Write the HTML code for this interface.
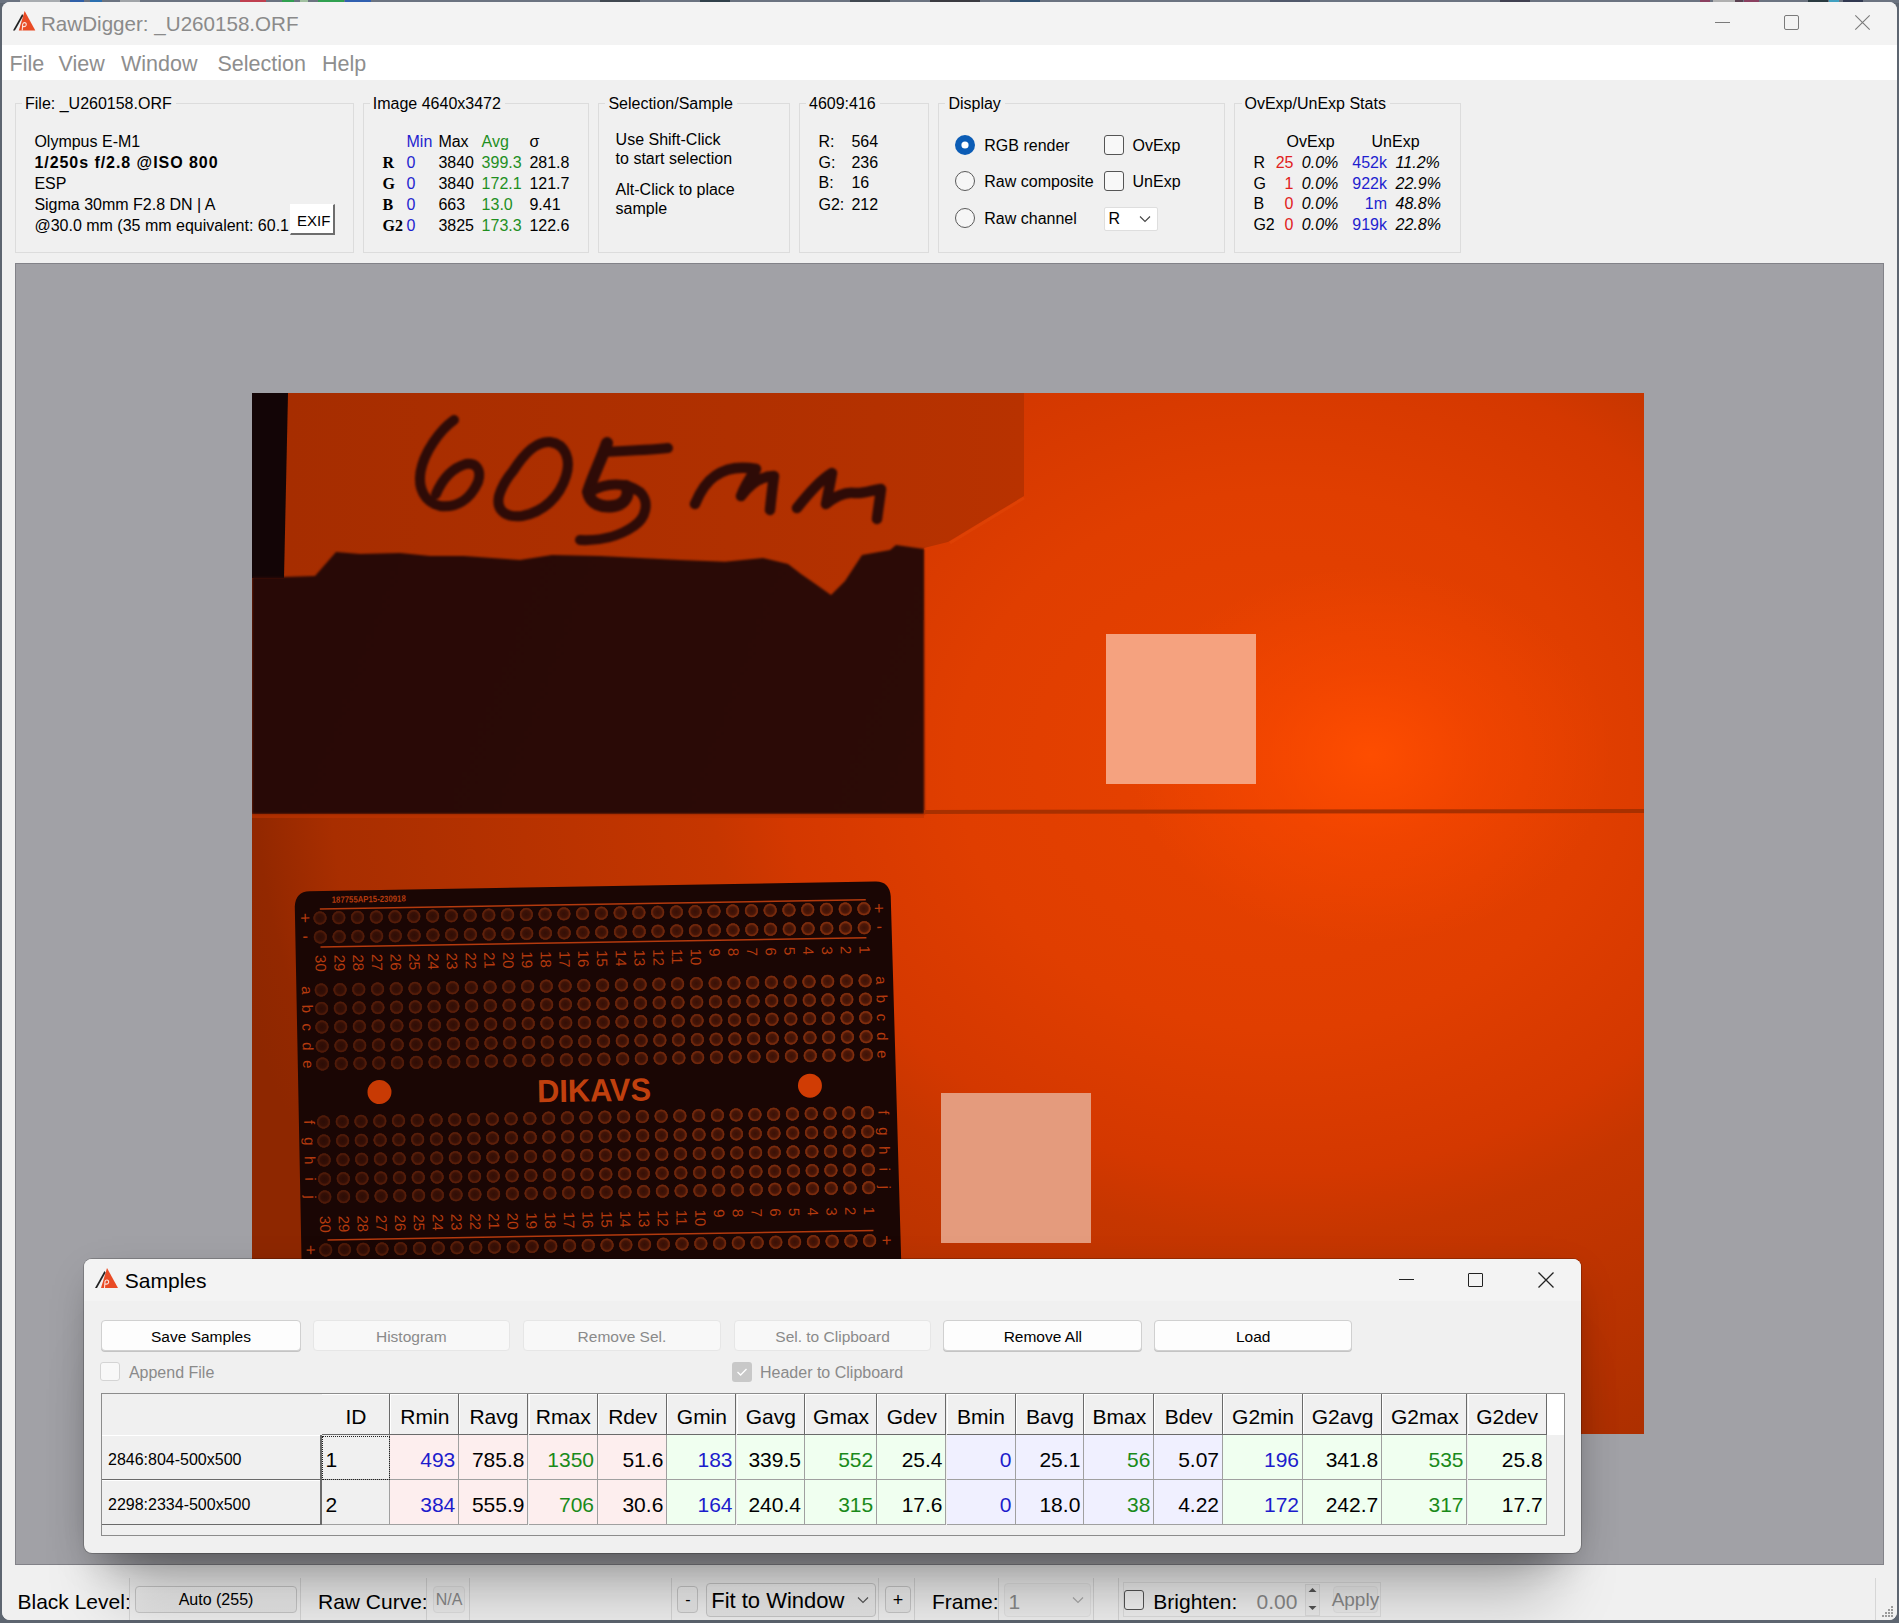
<!DOCTYPE html><html><head><meta charset="utf-8"><title>RawDigger</title><style>
*{margin:0;padding:0;box-sizing:border-box}
html,body{width:1899px;height:1623px;overflow:hidden;background:#5d6570;font-family:'Liberation Sans', sans-serif}
.t{position:absolute;white-space:pre;line-height:1;font-family:'Liberation Sans', sans-serif;color:#000}
svg{position:absolute;overflow:visible}
</style></head><body>
<div style="position:absolute;left:0px;top:0px;width:1899px;height:3px;background:#6b7380"></div>
<div style="position:absolute;left:20px;top:0px;width:40px;height:3px;background:#a8acb0"></div>
<div style="position:absolute;left:70px;top:0px;width:14px;height:3px;background:#2f5fa8"></div>
<div style="position:absolute;left:90px;top:0px;width:12px;height:3px;background:#2a6fb0"></div>
<div style="position:absolute;left:120px;top:0px;width:20px;height:3px;background:#a0a4a8"></div>
<div style="position:absolute;left:240px;top:0px;width:26px;height:3px;background:#c04050"></div>
<div style="position:absolute;left:282px;top:0px;width:12px;height:3px;background:#30a050"></div>
<div style="position:absolute;left:300px;top:0px;width:8px;height:3px;background:#a0c0a0"></div>
<div style="position:absolute;left:318px;top:0px;width:26px;height:3px;background:#30a050"></div>
<div style="position:absolute;left:345px;top:0px;width:26px;height:3px;background:#3060b0"></div>
<div style="position:absolute;left:600px;top:0px;width:40px;height:3px;background:#404850"></div>
<div style="position:absolute;left:700px;top:0px;width:30px;height:3px;background:#30404a"></div>
<div style="position:absolute;left:850px;top:0px;width:40px;height:3px;background:#404850"></div>
<div style="position:absolute;left:930px;top:0px;width:50px;height:3px;background:#3a3a40"></div>
<div style="position:absolute;left:1010px;top:0px;width:30px;height:3px;background:#305070"></div>
<div style="position:absolute;left:1270px;top:0px;width:40px;height:3px;background:#50586a"></div>
<div style="position:absolute;left:1500px;top:0px;width:30px;height:3px;background:#404050"></div>
<div style="position:absolute;left:1700px;top:0px;width:10px;height:3px;background:#8a4060"></div>
<div style="position:absolute;left:1713px;top:0px;width:30px;height:3px;background:#b0b0b0"></div>
<div style="position:absolute;left:1735px;top:0px;width:8px;height:3px;background:#5a4050"></div>
<div style="position:absolute;left:1744px;top:0px;width:15px;height:3px;background:#8a4060"></div>
<div style="position:absolute;left:1808px;top:0px;width:20px;height:3px;background:#2a3a40"></div>
<div style="position:absolute;left:1829px;top:0px;width:10px;height:3px;background:#40a0c0"></div>
<div style="position:absolute;left:1843px;top:0px;width:20px;height:3px;background:#303850"></div>
<div style="position:absolute;left:2px;top:2px;width:1895px;height:1618px;background:#f0f0f0;border-radius:8px;"></div>
<div style="position:absolute;left:2px;top:2px;width:1895px;height:43px;background:#f3f3f3;border-radius:8px 8px 0 0;"></div>
<div style="position:absolute;left:2px;top:45px;width:1895px;height:35px;background:#ffffff;"></div>
<svg style="left:13px;top:11px" width="23.28" height="20.37" viewBox="0 0 24 21">
<polygon points="12,0 23,20 6,20" fill="#e94b25"/>
<polygon points="0,20 9.5,3 10.6,4.8 2,20" fill="#222"/>
<path d="M9.5 20 L10 13.5 Q10.5 11.8 12.2 12 Q14 12.4 13.6 14.6 Q13 16.5 10.3 16" stroke="#fff" stroke-width="1.1" fill="none" opacity="0.85"/>
</svg>
<div class="t" style="top:13.56px;font-size:20.6px;color:#8a8a8a;left:41.00px;">RawDigger: _U260158.ORF</div>
<div style="position:absolute;left:1715px;top:22px;width:15px;height:1px;background:#7a7a7a;"></div>
<div style="position:absolute;left:1784.4px;top:15.2px;width:14.4px;height:14.4px;border:1.1px solid #7a7a7a;border-radius:2px;"></div>
<svg style="left:1855px;top:15px" width="15" height="15" viewBox="0 0 15 15"><path d="M0.3 0.3 L14.7 14.7 M14.7 0.3 L0.3 14.7" stroke="#7a7a7a" stroke-width="1.1"/></svg>
<div class="t" style="top:53.80px;font-size:21.5px;color:#8e8e8e;left:9.50px;">File</div>
<div class="t" style="top:53.80px;font-size:21.5px;color:#8e8e8e;left:58.50px;">View</div>
<div class="t" style="top:53.80px;font-size:21.5px;color:#8e8e8e;left:121.00px;">Window</div>
<div class="t" style="top:53.80px;font-size:21.5px;color:#8e8e8e;left:217.50px;">Selection</div>
<div class="t" style="top:53.80px;font-size:21.5px;color:#8e8e8e;left:322.00px;">Help</div>
<div style="position:absolute;left:15px;top:103px;width:339px;height:150px;border:1px solid #dcdcdc"></div>
<div class="t" style="top:96.16px;font-size:16px;left:22.00px;background:#f0f0f0;padding:0 4px 0 3px;">File: _U260158.ORF</div>
<div style="position:absolute;left:363px;top:103px;width:226px;height:150px;border:1px solid #dcdcdc"></div>
<div class="t" style="top:96.16px;font-size:16px;left:369.80px;background:#f0f0f0;padding:0 4px 0 3px;">Image 4640x3472</div>
<div style="position:absolute;left:598px;top:103px;width:192px;height:150px;border:1px solid #dcdcdc"></div>
<div class="t" style="top:96.16px;font-size:16px;left:605.40px;background:#f0f0f0;padding:0 4px 0 3px;">Selection/Sample</div>
<div style="position:absolute;left:799px;top:103px;width:130px;height:150px;border:1px solid #dcdcdc"></div>
<div class="t" style="top:96.16px;font-size:16px;left:806.00px;background:#f0f0f0;padding:0 4px 0 3px;">4609:416</div>
<div style="position:absolute;left:938px;top:103px;width:287px;height:150px;border:1px solid #dcdcdc"></div>
<div class="t" style="top:96.16px;font-size:16px;left:945.40px;background:#f0f0f0;padding:0 4px 0 3px;">Display</div>
<div style="position:absolute;left:1234px;top:103px;width:227px;height:150px;border:1px solid #dcdcdc"></div>
<div class="t" style="top:96.16px;font-size:16px;left:1241.50px;background:#f0f0f0;padding:0 4px 0 3px;">OvExp/UnExp Stats</div>
<div class="t" style="top:134.46px;font-size:16px;left:34.40px;">Olympus E-M1</div>
<div class="t" style="top:155.46px;font-size:16px;font-weight:bold;letter-spacing:0.95px;left:34.40px;">1/250s f/2.8 @ISO 800</div>
<div class="t" style="top:176.06px;font-size:16px;left:34.40px;">ESP</div>
<div class="t" style="top:197.46px;font-size:16px;left:34.40px;">Sigma 30mm F2.8 DN | A</div>
<div class="t" style="top:218.06px;font-size:16px;left:34.40px;width:256px;overflow:hidden;">@30.0 mm (35 mm equivalent: 60.1</div>
<div style="position:absolute;left:290px;top:204px;width:45px;height:31px;background:#fff;border-right:2px solid #6d6d6d;border-bottom:2px solid #6d6d6d;border-top:1px solid #fff;border-left:1px solid #fff"></div>
<div class="t" style="top:213.30px;font-size:15px;left:297.00px;">EXIF</div>
<div class="t" style="top:134.16px;font-size:16px;color:#1f1fcf;left:406.50px;">Min</div>
<div class="t" style="top:134.16px;font-size:16px;left:438.40px;">Max</div>
<div class="t" style="top:134.16px;font-size:16px;color:#1f8f1f;left:481.60px;">Avg</div>
<div class="t" style="top:134.16px;font-size:16px;left:529.40px;">σ</div>
<div class="t" style="top:155.20px;font-size:16px;font-weight:bold;font-family:'Liberation Serif', serif;left:382.50px;">R</div>
<div class="t" style="top:155.06px;font-size:16px;color:#1f1fcf;left:406.50px;">0</div>
<div class="t" style="top:155.06px;font-size:16px;left:438.40px;">3840</div>
<div class="t" style="top:155.06px;font-size:16px;color:#1f8f1f;left:481.60px;">399.3</div>
<div class="t" style="top:155.06px;font-size:16px;left:529.40px;">281.8</div>
<div class="t" style="top:176.10px;font-size:16px;font-weight:bold;font-family:'Liberation Serif', serif;left:382.50px;">G</div>
<div class="t" style="top:175.96px;font-size:16px;color:#1f1fcf;left:406.50px;">0</div>
<div class="t" style="top:175.96px;font-size:16px;left:438.40px;">3840</div>
<div class="t" style="top:175.96px;font-size:16px;color:#1f8f1f;left:481.60px;">172.1</div>
<div class="t" style="top:175.96px;font-size:16px;left:529.40px;">121.7</div>
<div class="t" style="top:196.90px;font-size:16px;font-weight:bold;font-family:'Liberation Serif', serif;left:382.50px;">B</div>
<div class="t" style="top:196.76px;font-size:16px;color:#1f1fcf;left:406.50px;">0</div>
<div class="t" style="top:196.76px;font-size:16px;left:438.40px;">663</div>
<div class="t" style="top:196.76px;font-size:16px;color:#1f8f1f;left:481.60px;">13.0</div>
<div class="t" style="top:196.76px;font-size:16px;left:529.40px;">9.41</div>
<div class="t" style="top:217.80px;font-size:16px;font-weight:bold;font-family:'Liberation Serif', serif;left:382.50px;">G2</div>
<div class="t" style="top:217.66px;font-size:16px;color:#1f1fcf;left:406.50px;">0</div>
<div class="t" style="top:217.66px;font-size:16px;left:438.40px;">3825</div>
<div class="t" style="top:217.66px;font-size:16px;color:#1f8f1f;left:481.60px;">173.3</div>
<div class="t" style="top:217.66px;font-size:16px;left:529.40px;">122.6</div>
<div class="t" style="top:131.96px;font-size:16px;left:615.60px;">Use Shift-Click</div>
<div class="t" style="top:150.76px;font-size:16px;left:615.60px;">to start selection</div>
<div class="t" style="top:182.06px;font-size:16px;left:615.60px;">Alt-Click to place</div>
<div class="t" style="top:200.86px;font-size:16px;left:615.60px;">sample</div>
<div class="t" style="top:133.76px;font-size:16px;left:818.50px;">R:</div>
<div class="t" style="top:133.76px;font-size:16px;left:851.40px;">564</div>
<div class="t" style="top:154.66px;font-size:16px;left:818.50px;">G:</div>
<div class="t" style="top:154.66px;font-size:16px;left:851.40px;">236</div>
<div class="t" style="top:175.46px;font-size:16px;left:818.50px;">B:</div>
<div class="t" style="top:175.46px;font-size:16px;left:851.40px;">16</div>
<div class="t" style="top:196.76px;font-size:16px;left:818.50px;">G2:</div>
<div class="t" style="top:196.76px;font-size:16px;left:851.40px;">212</div>
<svg style="left:954px;top:134px" width="22" height="22" viewBox="0 0 22 22"><circle cx="11" cy="11" r="10" fill="#0b5cb5"/><circle cx="11" cy="11" r="3.6" fill="#fff"/></svg>
<svg style="left:954px;top:169.8px" width="22" height="22" viewBox="0 0 22 22"><circle cx="11" cy="11" r="9.5" fill="#f6f6f6" stroke="#5a5a5a" stroke-width="1"/></svg>
<svg style="left:954px;top:206.6px" width="22" height="22" viewBox="0 0 22 22"><circle cx="11" cy="11" r="9.5" fill="#f6f6f6" stroke="#5a5a5a" stroke-width="1"/></svg>
<div class="t" style="top:138.06px;font-size:16px;left:984.30px;">RGB render</div>
<div class="t" style="top:174.06px;font-size:16px;left:984.30px;">Raw composite</div>
<div class="t" style="top:210.76px;font-size:16px;left:984.30px;">Raw channel</div>
<div style="position:absolute;left:1104px;top:135px;width:20px;height:20px;border:1px solid #555;border-radius:3px;background:#f8f8f8;"></div>
<div style="position:absolute;left:1104px;top:171.4px;width:20px;height:20px;border:1px solid #555;border-radius:3px;background:#f8f8f8;"></div>
<div class="t" style="top:138.06px;font-size:16px;left:1132.50px;">OvExp</div>
<div class="t" style="top:174.06px;font-size:16px;left:1132.50px;">UnExp</div>
<div style="position:absolute;left:1104.4px;top:206.6px;width:54px;height:24px;background:#fff;border:1px solid #dedede;border-radius:2px;"></div>
<div class="t" style="top:210.76px;font-size:16px;left:1108.50px;">R</div>
<svg style="left:1139px;top:215px" width="12" height="8" viewBox="0 0 12 8"><path d="M1 1.5 L6 6.5 L11 1.5" stroke="#444" stroke-width="1.1" fill="none"/></svg>
<div class="t" style="top:133.96px;font-size:16px;left:1286.60px;">OvExp</div>
<div class="t" style="top:133.96px;font-size:16px;left:1371.50px;">UnExp</div>
<div class="t" style="top:154.86px;font-size:16px;left:1253.40px;">R</div>
<div class="t" style="top:154.86px;font-size:16px;color:#e02020;right:605.50px;">25</div>
<div class="t" style="top:154.86px;font-size:16px;font-style:italic;left:1301.80px;">0.0%</div>
<div class="t" style="top:154.86px;font-size:16px;color:#1f1fcf;right:512.00px;">452k</div>
<div class="t" style="top:154.86px;font-size:16px;font-style:italic;left:1395.60px;">11.2%</div>
<div class="t" style="top:175.66px;font-size:16px;left:1253.40px;">G</div>
<div class="t" style="top:175.66px;font-size:16px;color:#e02020;right:605.50px;">1</div>
<div class="t" style="top:175.66px;font-size:16px;font-style:italic;left:1301.80px;">0.0%</div>
<div class="t" style="top:175.66px;font-size:16px;color:#1f1fcf;right:512.00px;">922k</div>
<div class="t" style="top:175.66px;font-size:16px;font-style:italic;left:1395.60px;">22.9%</div>
<div class="t" style="top:196.46px;font-size:16px;left:1253.40px;">B</div>
<div class="t" style="top:196.46px;font-size:16px;color:#e02020;right:605.50px;">0</div>
<div class="t" style="top:196.46px;font-size:16px;font-style:italic;left:1301.80px;">0.0%</div>
<div class="t" style="top:196.46px;font-size:16px;color:#1f1fcf;right:512.00px;">1m</div>
<div class="t" style="top:196.46px;font-size:16px;font-style:italic;left:1395.60px;">48.8%</div>
<div class="t" style="top:217.36px;font-size:16px;left:1253.40px;">G2</div>
<div class="t" style="top:217.36px;font-size:16px;color:#e02020;right:605.50px;">0</div>
<div class="t" style="top:217.36px;font-size:16px;font-style:italic;left:1301.80px;">0.0%</div>
<div class="t" style="top:217.36px;font-size:16px;color:#1f1fcf;right:512.00px;">919k</div>
<div class="t" style="top:217.36px;font-size:16px;font-style:italic;left:1395.60px;">22.8%</div>
<div style="position:absolute;left:15px;top:263px;width:1869px;height:1302px;background:#a1a1a6;border:1px solid #828288;"></div>
<svg style="left:252px;top:393px;overflow:hidden" width="1392" height="1041" viewBox="252 393 1392 1041">
<defs>
<radialGradient id="glow" gradientUnits="userSpaceOnUse" cx="1280" cy="760" r="1080" gradientTransform="translate(1280 760) scale(1 0.833) translate(-1280 -760)">
 <stop offset="0" stop-color="#e84200"/>
 <stop offset="0.3" stop-color="#e03e00"/>
 <stop offset="0.46" stop-color="#d43800"/>
 <stop offset="0.53" stop-color="#c63600"/>
 <stop offset="0.88" stop-color="#a82e00"/>
 <stop offset="0.95" stop-color="#932800"/>
 <stop offset="1" stop-color="#8e2700"/>
</radialGradient>
<radialGradient id="hot" gradientUnits="userSpaceOnUse" cx="1370" cy="755" r="210" gradientTransform="translate(1370 755) scale(1.15 0.9) translate(-1370 -755)">
 <stop offset="0" stop-color="#ff4e00" stop-opacity="0.95"/>
 <stop offset="0.45" stop-color="#ff4a00" stop-opacity="0.45"/>
 <stop offset="1" stop-color="#ff4a00" stop-opacity="0"/>
</radialGradient>
<linearGradient id="paper" gradientUnits="userSpaceOnUse" x1="288" y1="450" x2="1024" y2="450">
 <stop offset="0" stop-color="#a62d00"/>
 <stop offset="0.6" stop-color="#b03000"/>
 <stop offset="1" stop-color="#b83200"/>
</linearGradient>
<linearGradient id="card" gradientUnits="userSpaceOnUse" x1="252" y1="560" x2="924" y2="814">
 <stop offset="0" stop-color="#280906"/>
 <stop offset="1" stop-color="#2c0b06"/>
</linearGradient>
<filter id="soft" x="-5%" y="-5%" width="110%" height="110%" color-interpolation-filters="sRGB"><feGaussianBlur stdDeviation="0.9"/></filter>
</defs>
<rect x="252" y="393" width="1392" height="1041" fill="url(#glow)"/>
<rect x="252" y="393" width="1392" height="1041" fill="url(#hot)"/>
<polygon points="288,393 1024,393 1024,496 948,542 924,548 924,620 252,620 252,393" fill="url(#paper)"/>
<polyline points="1024,498 950,543" stroke="#f05a14" stroke-width="3" opacity="0.2" fill="none"/>
<polygon points="252,393 288,393 284,578 252,578" fill="#130506"/>
<polygon points="252,577 284,577 315,576 336,552 360,554 400,553 430,556 464,556 520,560 552,555 600,556 640,558 680,560 725,561.7 763,558 788,564 801,574 814,583 831,595 845,581 862,555 890,550 896,545 924,549 924.3,814 252,814" fill="url(#card)" filter="url(#soft)"/>
<polygon points="924,810 1644,809 1644,813 924,814" fill="#a83000"/>
<polygon points="252,814 924,814 924,818 252,818" fill="#c03400" opacity="0.6"/>
<g filter="url(#soft)">
<path d="M454 420 C440 430 424 452 420.5 472 C418 488 424 502 440 506 C456 508 470 500 478 482 C482 470 476 462 466 464 C452 468 442 480 436 494" stroke="#2e0b07" stroke-width="10" fill="none" stroke-linecap="round" stroke-linejoin="round"/>
<path d="M513 471 C525 452 538 441 550 442 C566 444 571 460 566 476 C560 496 544 512 522 516 C505 518 496 510 499 496 C502 486 507 478 513 471 Z" stroke="#2e0b07" stroke-width="10" fill="none" stroke-linecap="round" stroke-linejoin="round"/>
<path d="M607 443 C602 458 592 478 588 492 C590 504 602 508 614 506 C626 504 630 494 626 486" stroke="#2e0b07" stroke-width="12" fill="none" stroke-linecap="round" stroke-linejoin="round"/>
<path d="M604 452 C625 451 648 450 668 448" stroke="#2e0b07" stroke-width="10" fill="none" stroke-linecap="round" stroke-linejoin="round"/>
<path d="M590 492 C606 482 626 482 640 492 C650 502 646 518 634 526 C620 536 600 541 580 540" stroke="#2e0b07" stroke-width="10" fill="none" stroke-linecap="round" stroke-linejoin="round"/>
<path d="M695 504 C700 492 706 482 715 476 C726 468 740 466 756 469 C750 478 744 488 741 496 C750 484 762 476 774 476 C772 490 771 500 770 510" stroke="#2e0b07" stroke-width="10.5" fill="none" stroke-linecap="round" stroke-linejoin="round"/>
<path d="M797 508 C808 494 820 480 832 473 C830 484 828 494 826 504 C836 496 846 492 854 493 C864 494 872 490 881 489 C880 498 878 510 877 519" stroke="#2e0b07" stroke-width="10.5" fill="none" stroke-linecap="round" stroke-linejoin="round"/>
</g>
<rect x="1106" y="634" width="150" height="150" fill="#f5a27f"/>
<rect x="941" y="1093" width="150" height="150" fill="#e49b7d"/>
<g transform="rotate(-0.98 320 918)">
<path d="M310 891 L876 891 Q890 891 891 906 L897 1420 L296 1420 L295 906 Q296 891 310 891 Z" fill="#1a0604"/>
<line x1="320" y1="909" x2="866" y2="909" stroke="#b43a0e" stroke-width="1.5"/>
<line x1="320" y1="947" x2="866" y2="947" stroke="#b43a0e" stroke-width="1.5"/>
<line x1="322" y1="1240" x2="868" y2="1240" stroke="#b43a0e" stroke-width="1.5"/>
<defs><radialGradient id="hole"><stop offset="0" stop-color="#3e1206"/><stop offset="0.55" stop-color="#4e1808"/><stop offset="0.8" stop-color="#86300e"/><stop offset="0.92" stop-color="#6a240a"/><stop offset="1" stop-color="#1a0604" stop-opacity="0"/></radialGradient></defs><circle cx="320.0" cy="918" r="7.2" fill="url(#hole)" opacity="0.50"/><circle cx="338.8" cy="918" r="7.2" fill="url(#hole)" opacity="0.52"/><circle cx="357.5" cy="918" r="7.2" fill="url(#hole)" opacity="0.53"/><circle cx="376.3" cy="918" r="7.2" fill="url(#hole)" opacity="0.55"/><circle cx="395.0" cy="918" r="7.2" fill="url(#hole)" opacity="0.57"/><circle cx="413.8" cy="918" r="7.2" fill="url(#hole)" opacity="0.59"/><circle cx="432.6" cy="918" r="7.2" fill="url(#hole)" opacity="0.60"/><circle cx="451.3" cy="918" r="7.2" fill="url(#hole)" opacity="0.62"/><circle cx="470.1" cy="918" r="7.2" fill="url(#hole)" opacity="0.64"/><circle cx="488.8" cy="918" r="7.2" fill="url(#hole)" opacity="0.66"/><circle cx="507.6" cy="918" r="7.2" fill="url(#hole)" opacity="0.67"/><circle cx="526.4" cy="918" r="7.2" fill="url(#hole)" opacity="0.69"/><circle cx="545.1" cy="918" r="7.2" fill="url(#hole)" opacity="0.71"/><circle cx="563.9" cy="918" r="7.2" fill="url(#hole)" opacity="0.72"/><circle cx="582.6" cy="918" r="7.2" fill="url(#hole)" opacity="0.74"/><circle cx="601.4" cy="918" r="7.2" fill="url(#hole)" opacity="0.76"/><circle cx="620.2" cy="918" r="7.2" fill="url(#hole)" opacity="0.78"/><circle cx="638.9" cy="918" r="7.2" fill="url(#hole)" opacity="0.79"/><circle cx="657.7" cy="918" r="7.2" fill="url(#hole)" opacity="0.81"/><circle cx="676.4" cy="918" r="7.2" fill="url(#hole)" opacity="0.83"/><circle cx="695.2" cy="918" r="7.2" fill="url(#hole)" opacity="0.84"/><circle cx="714.0" cy="918" r="7.2" fill="url(#hole)" opacity="0.86"/><circle cx="732.7" cy="918" r="7.2" fill="url(#hole)" opacity="0.88"/><circle cx="751.5" cy="918" r="7.2" fill="url(#hole)" opacity="0.90"/><circle cx="770.2" cy="918" r="7.2" fill="url(#hole)" opacity="0.91"/><circle cx="789.0" cy="918" r="7.2" fill="url(#hole)" opacity="0.93"/><circle cx="807.8" cy="918" r="7.2" fill="url(#hole)" opacity="0.95"/><circle cx="826.5" cy="918" r="7.2" fill="url(#hole)" opacity="0.97"/><circle cx="845.3" cy="918" r="7.2" fill="url(#hole)" opacity="0.98"/><circle cx="864.0" cy="918" r="7.2" fill="url(#hole)" opacity="1.00"/><circle cx="320.0" cy="937" r="7.2" fill="url(#hole)" opacity="0.50"/><circle cx="338.8" cy="937" r="7.2" fill="url(#hole)" opacity="0.52"/><circle cx="357.5" cy="937" r="7.2" fill="url(#hole)" opacity="0.53"/><circle cx="376.3" cy="937" r="7.2" fill="url(#hole)" opacity="0.55"/><circle cx="395.0" cy="937" r="7.2" fill="url(#hole)" opacity="0.57"/><circle cx="413.8" cy="937" r="7.2" fill="url(#hole)" opacity="0.59"/><circle cx="432.6" cy="937" r="7.2" fill="url(#hole)" opacity="0.60"/><circle cx="451.3" cy="937" r="7.2" fill="url(#hole)" opacity="0.62"/><circle cx="470.1" cy="937" r="7.2" fill="url(#hole)" opacity="0.64"/><circle cx="488.8" cy="937" r="7.2" fill="url(#hole)" opacity="0.66"/><circle cx="507.6" cy="937" r="7.2" fill="url(#hole)" opacity="0.67"/><circle cx="526.4" cy="937" r="7.2" fill="url(#hole)" opacity="0.69"/><circle cx="545.1" cy="937" r="7.2" fill="url(#hole)" opacity="0.71"/><circle cx="563.9" cy="937" r="7.2" fill="url(#hole)" opacity="0.72"/><circle cx="582.6" cy="937" r="7.2" fill="url(#hole)" opacity="0.74"/><circle cx="601.4" cy="937" r="7.2" fill="url(#hole)" opacity="0.76"/><circle cx="620.2" cy="937" r="7.2" fill="url(#hole)" opacity="0.78"/><circle cx="638.9" cy="937" r="7.2" fill="url(#hole)" opacity="0.79"/><circle cx="657.7" cy="937" r="7.2" fill="url(#hole)" opacity="0.81"/><circle cx="676.4" cy="937" r="7.2" fill="url(#hole)" opacity="0.83"/><circle cx="695.2" cy="937" r="7.2" fill="url(#hole)" opacity="0.84"/><circle cx="714.0" cy="937" r="7.2" fill="url(#hole)" opacity="0.86"/><circle cx="732.7" cy="937" r="7.2" fill="url(#hole)" opacity="0.88"/><circle cx="751.5" cy="937" r="7.2" fill="url(#hole)" opacity="0.90"/><circle cx="770.2" cy="937" r="7.2" fill="url(#hole)" opacity="0.91"/><circle cx="789.0" cy="937" r="7.2" fill="url(#hole)" opacity="0.93"/><circle cx="807.8" cy="937" r="7.2" fill="url(#hole)" opacity="0.95"/><circle cx="826.5" cy="937" r="7.2" fill="url(#hole)" opacity="0.97"/><circle cx="845.3" cy="937" r="7.2" fill="url(#hole)" opacity="0.98"/><circle cx="864.0" cy="937" r="7.2" fill="url(#hole)" opacity="1.00"/><circle cx="320.0" cy="990" r="7.2" fill="url(#hole)" opacity="0.50"/><circle cx="338.8" cy="990" r="7.2" fill="url(#hole)" opacity="0.52"/><circle cx="357.5" cy="990" r="7.2" fill="url(#hole)" opacity="0.53"/><circle cx="376.3" cy="990" r="7.2" fill="url(#hole)" opacity="0.55"/><circle cx="395.0" cy="990" r="7.2" fill="url(#hole)" opacity="0.57"/><circle cx="413.8" cy="990" r="7.2" fill="url(#hole)" opacity="0.59"/><circle cx="432.6" cy="990" r="7.2" fill="url(#hole)" opacity="0.60"/><circle cx="451.3" cy="990" r="7.2" fill="url(#hole)" opacity="0.62"/><circle cx="470.1" cy="990" r="7.2" fill="url(#hole)" opacity="0.64"/><circle cx="488.8" cy="990" r="7.2" fill="url(#hole)" opacity="0.66"/><circle cx="507.6" cy="990" r="7.2" fill="url(#hole)" opacity="0.67"/><circle cx="526.4" cy="990" r="7.2" fill="url(#hole)" opacity="0.69"/><circle cx="545.1" cy="990" r="7.2" fill="url(#hole)" opacity="0.71"/><circle cx="563.9" cy="990" r="7.2" fill="url(#hole)" opacity="0.72"/><circle cx="582.6" cy="990" r="7.2" fill="url(#hole)" opacity="0.74"/><circle cx="601.4" cy="990" r="7.2" fill="url(#hole)" opacity="0.76"/><circle cx="620.2" cy="990" r="7.2" fill="url(#hole)" opacity="0.78"/><circle cx="638.9" cy="990" r="7.2" fill="url(#hole)" opacity="0.79"/><circle cx="657.7" cy="990" r="7.2" fill="url(#hole)" opacity="0.81"/><circle cx="676.4" cy="990" r="7.2" fill="url(#hole)" opacity="0.83"/><circle cx="695.2" cy="990" r="7.2" fill="url(#hole)" opacity="0.84"/><circle cx="714.0" cy="990" r="7.2" fill="url(#hole)" opacity="0.86"/><circle cx="732.7" cy="990" r="7.2" fill="url(#hole)" opacity="0.88"/><circle cx="751.5" cy="990" r="7.2" fill="url(#hole)" opacity="0.90"/><circle cx="770.2" cy="990" r="7.2" fill="url(#hole)" opacity="0.91"/><circle cx="789.0" cy="990" r="7.2" fill="url(#hole)" opacity="0.93"/><circle cx="807.8" cy="990" r="7.2" fill="url(#hole)" opacity="0.95"/><circle cx="826.5" cy="990" r="7.2" fill="url(#hole)" opacity="0.97"/><circle cx="845.3" cy="990" r="7.2" fill="url(#hole)" opacity="0.98"/><circle cx="864.0" cy="990" r="7.2" fill="url(#hole)" opacity="1.00"/><circle cx="320.0" cy="1008.5" r="7.2" fill="url(#hole)" opacity="0.50"/><circle cx="338.8" cy="1008.5" r="7.2" fill="url(#hole)" opacity="0.52"/><circle cx="357.5" cy="1008.5" r="7.2" fill="url(#hole)" opacity="0.53"/><circle cx="376.3" cy="1008.5" r="7.2" fill="url(#hole)" opacity="0.55"/><circle cx="395.0" cy="1008.5" r="7.2" fill="url(#hole)" opacity="0.57"/><circle cx="413.8" cy="1008.5" r="7.2" fill="url(#hole)" opacity="0.59"/><circle cx="432.6" cy="1008.5" r="7.2" fill="url(#hole)" opacity="0.60"/><circle cx="451.3" cy="1008.5" r="7.2" fill="url(#hole)" opacity="0.62"/><circle cx="470.1" cy="1008.5" r="7.2" fill="url(#hole)" opacity="0.64"/><circle cx="488.8" cy="1008.5" r="7.2" fill="url(#hole)" opacity="0.66"/><circle cx="507.6" cy="1008.5" r="7.2" fill="url(#hole)" opacity="0.67"/><circle cx="526.4" cy="1008.5" r="7.2" fill="url(#hole)" opacity="0.69"/><circle cx="545.1" cy="1008.5" r="7.2" fill="url(#hole)" opacity="0.71"/><circle cx="563.9" cy="1008.5" r="7.2" fill="url(#hole)" opacity="0.72"/><circle cx="582.6" cy="1008.5" r="7.2" fill="url(#hole)" opacity="0.74"/><circle cx="601.4" cy="1008.5" r="7.2" fill="url(#hole)" opacity="0.76"/><circle cx="620.2" cy="1008.5" r="7.2" fill="url(#hole)" opacity="0.78"/><circle cx="638.9" cy="1008.5" r="7.2" fill="url(#hole)" opacity="0.79"/><circle cx="657.7" cy="1008.5" r="7.2" fill="url(#hole)" opacity="0.81"/><circle cx="676.4" cy="1008.5" r="7.2" fill="url(#hole)" opacity="0.83"/><circle cx="695.2" cy="1008.5" r="7.2" fill="url(#hole)" opacity="0.84"/><circle cx="714.0" cy="1008.5" r="7.2" fill="url(#hole)" opacity="0.86"/><circle cx="732.7" cy="1008.5" r="7.2" fill="url(#hole)" opacity="0.88"/><circle cx="751.5" cy="1008.5" r="7.2" fill="url(#hole)" opacity="0.90"/><circle cx="770.2" cy="1008.5" r="7.2" fill="url(#hole)" opacity="0.91"/><circle cx="789.0" cy="1008.5" r="7.2" fill="url(#hole)" opacity="0.93"/><circle cx="807.8" cy="1008.5" r="7.2" fill="url(#hole)" opacity="0.95"/><circle cx="826.5" cy="1008.5" r="7.2" fill="url(#hole)" opacity="0.97"/><circle cx="845.3" cy="1008.5" r="7.2" fill="url(#hole)" opacity="0.98"/><circle cx="864.0" cy="1008.5" r="7.2" fill="url(#hole)" opacity="1.00"/><circle cx="320.0" cy="1027" r="7.2" fill="url(#hole)" opacity="0.50"/><circle cx="338.8" cy="1027" r="7.2" fill="url(#hole)" opacity="0.52"/><circle cx="357.5" cy="1027" r="7.2" fill="url(#hole)" opacity="0.53"/><circle cx="376.3" cy="1027" r="7.2" fill="url(#hole)" opacity="0.55"/><circle cx="395.0" cy="1027" r="7.2" fill="url(#hole)" opacity="0.57"/><circle cx="413.8" cy="1027" r="7.2" fill="url(#hole)" opacity="0.59"/><circle cx="432.6" cy="1027" r="7.2" fill="url(#hole)" opacity="0.60"/><circle cx="451.3" cy="1027" r="7.2" fill="url(#hole)" opacity="0.62"/><circle cx="470.1" cy="1027" r="7.2" fill="url(#hole)" opacity="0.64"/><circle cx="488.8" cy="1027" r="7.2" fill="url(#hole)" opacity="0.66"/><circle cx="507.6" cy="1027" r="7.2" fill="url(#hole)" opacity="0.67"/><circle cx="526.4" cy="1027" r="7.2" fill="url(#hole)" opacity="0.69"/><circle cx="545.1" cy="1027" r="7.2" fill="url(#hole)" opacity="0.71"/><circle cx="563.9" cy="1027" r="7.2" fill="url(#hole)" opacity="0.72"/><circle cx="582.6" cy="1027" r="7.2" fill="url(#hole)" opacity="0.74"/><circle cx="601.4" cy="1027" r="7.2" fill="url(#hole)" opacity="0.76"/><circle cx="620.2" cy="1027" r="7.2" fill="url(#hole)" opacity="0.78"/><circle cx="638.9" cy="1027" r="7.2" fill="url(#hole)" opacity="0.79"/><circle cx="657.7" cy="1027" r="7.2" fill="url(#hole)" opacity="0.81"/><circle cx="676.4" cy="1027" r="7.2" fill="url(#hole)" opacity="0.83"/><circle cx="695.2" cy="1027" r="7.2" fill="url(#hole)" opacity="0.84"/><circle cx="714.0" cy="1027" r="7.2" fill="url(#hole)" opacity="0.86"/><circle cx="732.7" cy="1027" r="7.2" fill="url(#hole)" opacity="0.88"/><circle cx="751.5" cy="1027" r="7.2" fill="url(#hole)" opacity="0.90"/><circle cx="770.2" cy="1027" r="7.2" fill="url(#hole)" opacity="0.91"/><circle cx="789.0" cy="1027" r="7.2" fill="url(#hole)" opacity="0.93"/><circle cx="807.8" cy="1027" r="7.2" fill="url(#hole)" opacity="0.95"/><circle cx="826.5" cy="1027" r="7.2" fill="url(#hole)" opacity="0.97"/><circle cx="845.3" cy="1027" r="7.2" fill="url(#hole)" opacity="0.98"/><circle cx="864.0" cy="1027" r="7.2" fill="url(#hole)" opacity="1.00"/><circle cx="320.0" cy="1046" r="7.2" fill="url(#hole)" opacity="0.50"/><circle cx="338.8" cy="1046" r="7.2" fill="url(#hole)" opacity="0.52"/><circle cx="357.5" cy="1046" r="7.2" fill="url(#hole)" opacity="0.53"/><circle cx="376.3" cy="1046" r="7.2" fill="url(#hole)" opacity="0.55"/><circle cx="395.0" cy="1046" r="7.2" fill="url(#hole)" opacity="0.57"/><circle cx="413.8" cy="1046" r="7.2" fill="url(#hole)" opacity="0.59"/><circle cx="432.6" cy="1046" r="7.2" fill="url(#hole)" opacity="0.60"/><circle cx="451.3" cy="1046" r="7.2" fill="url(#hole)" opacity="0.62"/><circle cx="470.1" cy="1046" r="7.2" fill="url(#hole)" opacity="0.64"/><circle cx="488.8" cy="1046" r="7.2" fill="url(#hole)" opacity="0.66"/><circle cx="507.6" cy="1046" r="7.2" fill="url(#hole)" opacity="0.67"/><circle cx="526.4" cy="1046" r="7.2" fill="url(#hole)" opacity="0.69"/><circle cx="545.1" cy="1046" r="7.2" fill="url(#hole)" opacity="0.71"/><circle cx="563.9" cy="1046" r="7.2" fill="url(#hole)" opacity="0.72"/><circle cx="582.6" cy="1046" r="7.2" fill="url(#hole)" opacity="0.74"/><circle cx="601.4" cy="1046" r="7.2" fill="url(#hole)" opacity="0.76"/><circle cx="620.2" cy="1046" r="7.2" fill="url(#hole)" opacity="0.78"/><circle cx="638.9" cy="1046" r="7.2" fill="url(#hole)" opacity="0.79"/><circle cx="657.7" cy="1046" r="7.2" fill="url(#hole)" opacity="0.81"/><circle cx="676.4" cy="1046" r="7.2" fill="url(#hole)" opacity="0.83"/><circle cx="695.2" cy="1046" r="7.2" fill="url(#hole)" opacity="0.84"/><circle cx="714.0" cy="1046" r="7.2" fill="url(#hole)" opacity="0.86"/><circle cx="732.7" cy="1046" r="7.2" fill="url(#hole)" opacity="0.88"/><circle cx="751.5" cy="1046" r="7.2" fill="url(#hole)" opacity="0.90"/><circle cx="770.2" cy="1046" r="7.2" fill="url(#hole)" opacity="0.91"/><circle cx="789.0" cy="1046" r="7.2" fill="url(#hole)" opacity="0.93"/><circle cx="807.8" cy="1046" r="7.2" fill="url(#hole)" opacity="0.95"/><circle cx="826.5" cy="1046" r="7.2" fill="url(#hole)" opacity="0.97"/><circle cx="845.3" cy="1046" r="7.2" fill="url(#hole)" opacity="0.98"/><circle cx="864.0" cy="1046" r="7.2" fill="url(#hole)" opacity="1.00"/><circle cx="320.0" cy="1064" r="7.2" fill="url(#hole)" opacity="0.50"/><circle cx="338.8" cy="1064" r="7.2" fill="url(#hole)" opacity="0.52"/><circle cx="357.5" cy="1064" r="7.2" fill="url(#hole)" opacity="0.53"/><circle cx="376.3" cy="1064" r="7.2" fill="url(#hole)" opacity="0.55"/><circle cx="395.0" cy="1064" r="7.2" fill="url(#hole)" opacity="0.57"/><circle cx="413.8" cy="1064" r="7.2" fill="url(#hole)" opacity="0.59"/><circle cx="432.6" cy="1064" r="7.2" fill="url(#hole)" opacity="0.60"/><circle cx="451.3" cy="1064" r="7.2" fill="url(#hole)" opacity="0.62"/><circle cx="470.1" cy="1064" r="7.2" fill="url(#hole)" opacity="0.64"/><circle cx="488.8" cy="1064" r="7.2" fill="url(#hole)" opacity="0.66"/><circle cx="507.6" cy="1064" r="7.2" fill="url(#hole)" opacity="0.67"/><circle cx="526.4" cy="1064" r="7.2" fill="url(#hole)" opacity="0.69"/><circle cx="545.1" cy="1064" r="7.2" fill="url(#hole)" opacity="0.71"/><circle cx="563.9" cy="1064" r="7.2" fill="url(#hole)" opacity="0.72"/><circle cx="582.6" cy="1064" r="7.2" fill="url(#hole)" opacity="0.74"/><circle cx="601.4" cy="1064" r="7.2" fill="url(#hole)" opacity="0.76"/><circle cx="620.2" cy="1064" r="7.2" fill="url(#hole)" opacity="0.78"/><circle cx="638.9" cy="1064" r="7.2" fill="url(#hole)" opacity="0.79"/><circle cx="657.7" cy="1064" r="7.2" fill="url(#hole)" opacity="0.81"/><circle cx="676.4" cy="1064" r="7.2" fill="url(#hole)" opacity="0.83"/><circle cx="695.2" cy="1064" r="7.2" fill="url(#hole)" opacity="0.84"/><circle cx="714.0" cy="1064" r="7.2" fill="url(#hole)" opacity="0.86"/><circle cx="732.7" cy="1064" r="7.2" fill="url(#hole)" opacity="0.88"/><circle cx="751.5" cy="1064" r="7.2" fill="url(#hole)" opacity="0.90"/><circle cx="770.2" cy="1064" r="7.2" fill="url(#hole)" opacity="0.91"/><circle cx="789.0" cy="1064" r="7.2" fill="url(#hole)" opacity="0.93"/><circle cx="807.8" cy="1064" r="7.2" fill="url(#hole)" opacity="0.95"/><circle cx="826.5" cy="1064" r="7.2" fill="url(#hole)" opacity="0.97"/><circle cx="845.3" cy="1064" r="7.2" fill="url(#hole)" opacity="0.98"/><circle cx="864.0" cy="1064" r="7.2" fill="url(#hole)" opacity="1.00"/><circle cx="320.0" cy="1122" r="7.2" fill="url(#hole)" opacity="0.50"/><circle cx="338.8" cy="1122" r="7.2" fill="url(#hole)" opacity="0.52"/><circle cx="357.5" cy="1122" r="7.2" fill="url(#hole)" opacity="0.53"/><circle cx="376.3" cy="1122" r="7.2" fill="url(#hole)" opacity="0.55"/><circle cx="395.0" cy="1122" r="7.2" fill="url(#hole)" opacity="0.57"/><circle cx="413.8" cy="1122" r="7.2" fill="url(#hole)" opacity="0.59"/><circle cx="432.6" cy="1122" r="7.2" fill="url(#hole)" opacity="0.60"/><circle cx="451.3" cy="1122" r="7.2" fill="url(#hole)" opacity="0.62"/><circle cx="470.1" cy="1122" r="7.2" fill="url(#hole)" opacity="0.64"/><circle cx="488.8" cy="1122" r="7.2" fill="url(#hole)" opacity="0.66"/><circle cx="507.6" cy="1122" r="7.2" fill="url(#hole)" opacity="0.67"/><circle cx="526.4" cy="1122" r="7.2" fill="url(#hole)" opacity="0.69"/><circle cx="545.1" cy="1122" r="7.2" fill="url(#hole)" opacity="0.71"/><circle cx="563.9" cy="1122" r="7.2" fill="url(#hole)" opacity="0.72"/><circle cx="582.6" cy="1122" r="7.2" fill="url(#hole)" opacity="0.74"/><circle cx="601.4" cy="1122" r="7.2" fill="url(#hole)" opacity="0.76"/><circle cx="620.2" cy="1122" r="7.2" fill="url(#hole)" opacity="0.78"/><circle cx="638.9" cy="1122" r="7.2" fill="url(#hole)" opacity="0.79"/><circle cx="657.7" cy="1122" r="7.2" fill="url(#hole)" opacity="0.81"/><circle cx="676.4" cy="1122" r="7.2" fill="url(#hole)" opacity="0.83"/><circle cx="695.2" cy="1122" r="7.2" fill="url(#hole)" opacity="0.84"/><circle cx="714.0" cy="1122" r="7.2" fill="url(#hole)" opacity="0.86"/><circle cx="732.7" cy="1122" r="7.2" fill="url(#hole)" opacity="0.88"/><circle cx="751.5" cy="1122" r="7.2" fill="url(#hole)" opacity="0.90"/><circle cx="770.2" cy="1122" r="7.2" fill="url(#hole)" opacity="0.91"/><circle cx="789.0" cy="1122" r="7.2" fill="url(#hole)" opacity="0.93"/><circle cx="807.8" cy="1122" r="7.2" fill="url(#hole)" opacity="0.95"/><circle cx="826.5" cy="1122" r="7.2" fill="url(#hole)" opacity="0.97"/><circle cx="845.3" cy="1122" r="7.2" fill="url(#hole)" opacity="0.98"/><circle cx="864.0" cy="1122" r="7.2" fill="url(#hole)" opacity="1.00"/><circle cx="320.0" cy="1141" r="7.2" fill="url(#hole)" opacity="0.50"/><circle cx="338.8" cy="1141" r="7.2" fill="url(#hole)" opacity="0.52"/><circle cx="357.5" cy="1141" r="7.2" fill="url(#hole)" opacity="0.53"/><circle cx="376.3" cy="1141" r="7.2" fill="url(#hole)" opacity="0.55"/><circle cx="395.0" cy="1141" r="7.2" fill="url(#hole)" opacity="0.57"/><circle cx="413.8" cy="1141" r="7.2" fill="url(#hole)" opacity="0.59"/><circle cx="432.6" cy="1141" r="7.2" fill="url(#hole)" opacity="0.60"/><circle cx="451.3" cy="1141" r="7.2" fill="url(#hole)" opacity="0.62"/><circle cx="470.1" cy="1141" r="7.2" fill="url(#hole)" opacity="0.64"/><circle cx="488.8" cy="1141" r="7.2" fill="url(#hole)" opacity="0.66"/><circle cx="507.6" cy="1141" r="7.2" fill="url(#hole)" opacity="0.67"/><circle cx="526.4" cy="1141" r="7.2" fill="url(#hole)" opacity="0.69"/><circle cx="545.1" cy="1141" r="7.2" fill="url(#hole)" opacity="0.71"/><circle cx="563.9" cy="1141" r="7.2" fill="url(#hole)" opacity="0.72"/><circle cx="582.6" cy="1141" r="7.2" fill="url(#hole)" opacity="0.74"/><circle cx="601.4" cy="1141" r="7.2" fill="url(#hole)" opacity="0.76"/><circle cx="620.2" cy="1141" r="7.2" fill="url(#hole)" opacity="0.78"/><circle cx="638.9" cy="1141" r="7.2" fill="url(#hole)" opacity="0.79"/><circle cx="657.7" cy="1141" r="7.2" fill="url(#hole)" opacity="0.81"/><circle cx="676.4" cy="1141" r="7.2" fill="url(#hole)" opacity="0.83"/><circle cx="695.2" cy="1141" r="7.2" fill="url(#hole)" opacity="0.84"/><circle cx="714.0" cy="1141" r="7.2" fill="url(#hole)" opacity="0.86"/><circle cx="732.7" cy="1141" r="7.2" fill="url(#hole)" opacity="0.88"/><circle cx="751.5" cy="1141" r="7.2" fill="url(#hole)" opacity="0.90"/><circle cx="770.2" cy="1141" r="7.2" fill="url(#hole)" opacity="0.91"/><circle cx="789.0" cy="1141" r="7.2" fill="url(#hole)" opacity="0.93"/><circle cx="807.8" cy="1141" r="7.2" fill="url(#hole)" opacity="0.95"/><circle cx="826.5" cy="1141" r="7.2" fill="url(#hole)" opacity="0.97"/><circle cx="845.3" cy="1141" r="7.2" fill="url(#hole)" opacity="0.98"/><circle cx="864.0" cy="1141" r="7.2" fill="url(#hole)" opacity="1.00"/><circle cx="320.0" cy="1160" r="7.2" fill="url(#hole)" opacity="0.50"/><circle cx="338.8" cy="1160" r="7.2" fill="url(#hole)" opacity="0.52"/><circle cx="357.5" cy="1160" r="7.2" fill="url(#hole)" opacity="0.53"/><circle cx="376.3" cy="1160" r="7.2" fill="url(#hole)" opacity="0.55"/><circle cx="395.0" cy="1160" r="7.2" fill="url(#hole)" opacity="0.57"/><circle cx="413.8" cy="1160" r="7.2" fill="url(#hole)" opacity="0.59"/><circle cx="432.6" cy="1160" r="7.2" fill="url(#hole)" opacity="0.60"/><circle cx="451.3" cy="1160" r="7.2" fill="url(#hole)" opacity="0.62"/><circle cx="470.1" cy="1160" r="7.2" fill="url(#hole)" opacity="0.64"/><circle cx="488.8" cy="1160" r="7.2" fill="url(#hole)" opacity="0.66"/><circle cx="507.6" cy="1160" r="7.2" fill="url(#hole)" opacity="0.67"/><circle cx="526.4" cy="1160" r="7.2" fill="url(#hole)" opacity="0.69"/><circle cx="545.1" cy="1160" r="7.2" fill="url(#hole)" opacity="0.71"/><circle cx="563.9" cy="1160" r="7.2" fill="url(#hole)" opacity="0.72"/><circle cx="582.6" cy="1160" r="7.2" fill="url(#hole)" opacity="0.74"/><circle cx="601.4" cy="1160" r="7.2" fill="url(#hole)" opacity="0.76"/><circle cx="620.2" cy="1160" r="7.2" fill="url(#hole)" opacity="0.78"/><circle cx="638.9" cy="1160" r="7.2" fill="url(#hole)" opacity="0.79"/><circle cx="657.7" cy="1160" r="7.2" fill="url(#hole)" opacity="0.81"/><circle cx="676.4" cy="1160" r="7.2" fill="url(#hole)" opacity="0.83"/><circle cx="695.2" cy="1160" r="7.2" fill="url(#hole)" opacity="0.84"/><circle cx="714.0" cy="1160" r="7.2" fill="url(#hole)" opacity="0.86"/><circle cx="732.7" cy="1160" r="7.2" fill="url(#hole)" opacity="0.88"/><circle cx="751.5" cy="1160" r="7.2" fill="url(#hole)" opacity="0.90"/><circle cx="770.2" cy="1160" r="7.2" fill="url(#hole)" opacity="0.91"/><circle cx="789.0" cy="1160" r="7.2" fill="url(#hole)" opacity="0.93"/><circle cx="807.8" cy="1160" r="7.2" fill="url(#hole)" opacity="0.95"/><circle cx="826.5" cy="1160" r="7.2" fill="url(#hole)" opacity="0.97"/><circle cx="845.3" cy="1160" r="7.2" fill="url(#hole)" opacity="0.98"/><circle cx="864.0" cy="1160" r="7.2" fill="url(#hole)" opacity="1.00"/><circle cx="320.0" cy="1179" r="7.2" fill="url(#hole)" opacity="0.50"/><circle cx="338.8" cy="1179" r="7.2" fill="url(#hole)" opacity="0.52"/><circle cx="357.5" cy="1179" r="7.2" fill="url(#hole)" opacity="0.53"/><circle cx="376.3" cy="1179" r="7.2" fill="url(#hole)" opacity="0.55"/><circle cx="395.0" cy="1179" r="7.2" fill="url(#hole)" opacity="0.57"/><circle cx="413.8" cy="1179" r="7.2" fill="url(#hole)" opacity="0.59"/><circle cx="432.6" cy="1179" r="7.2" fill="url(#hole)" opacity="0.60"/><circle cx="451.3" cy="1179" r="7.2" fill="url(#hole)" opacity="0.62"/><circle cx="470.1" cy="1179" r="7.2" fill="url(#hole)" opacity="0.64"/><circle cx="488.8" cy="1179" r="7.2" fill="url(#hole)" opacity="0.66"/><circle cx="507.6" cy="1179" r="7.2" fill="url(#hole)" opacity="0.67"/><circle cx="526.4" cy="1179" r="7.2" fill="url(#hole)" opacity="0.69"/><circle cx="545.1" cy="1179" r="7.2" fill="url(#hole)" opacity="0.71"/><circle cx="563.9" cy="1179" r="7.2" fill="url(#hole)" opacity="0.72"/><circle cx="582.6" cy="1179" r="7.2" fill="url(#hole)" opacity="0.74"/><circle cx="601.4" cy="1179" r="7.2" fill="url(#hole)" opacity="0.76"/><circle cx="620.2" cy="1179" r="7.2" fill="url(#hole)" opacity="0.78"/><circle cx="638.9" cy="1179" r="7.2" fill="url(#hole)" opacity="0.79"/><circle cx="657.7" cy="1179" r="7.2" fill="url(#hole)" opacity="0.81"/><circle cx="676.4" cy="1179" r="7.2" fill="url(#hole)" opacity="0.83"/><circle cx="695.2" cy="1179" r="7.2" fill="url(#hole)" opacity="0.84"/><circle cx="714.0" cy="1179" r="7.2" fill="url(#hole)" opacity="0.86"/><circle cx="732.7" cy="1179" r="7.2" fill="url(#hole)" opacity="0.88"/><circle cx="751.5" cy="1179" r="7.2" fill="url(#hole)" opacity="0.90"/><circle cx="770.2" cy="1179" r="7.2" fill="url(#hole)" opacity="0.91"/><circle cx="789.0" cy="1179" r="7.2" fill="url(#hole)" opacity="0.93"/><circle cx="807.8" cy="1179" r="7.2" fill="url(#hole)" opacity="0.95"/><circle cx="826.5" cy="1179" r="7.2" fill="url(#hole)" opacity="0.97"/><circle cx="845.3" cy="1179" r="7.2" fill="url(#hole)" opacity="0.98"/><circle cx="864.0" cy="1179" r="7.2" fill="url(#hole)" opacity="1.00"/><circle cx="320.0" cy="1197" r="7.2" fill="url(#hole)" opacity="0.50"/><circle cx="338.8" cy="1197" r="7.2" fill="url(#hole)" opacity="0.52"/><circle cx="357.5" cy="1197" r="7.2" fill="url(#hole)" opacity="0.53"/><circle cx="376.3" cy="1197" r="7.2" fill="url(#hole)" opacity="0.55"/><circle cx="395.0" cy="1197" r="7.2" fill="url(#hole)" opacity="0.57"/><circle cx="413.8" cy="1197" r="7.2" fill="url(#hole)" opacity="0.59"/><circle cx="432.6" cy="1197" r="7.2" fill="url(#hole)" opacity="0.60"/><circle cx="451.3" cy="1197" r="7.2" fill="url(#hole)" opacity="0.62"/><circle cx="470.1" cy="1197" r="7.2" fill="url(#hole)" opacity="0.64"/><circle cx="488.8" cy="1197" r="7.2" fill="url(#hole)" opacity="0.66"/><circle cx="507.6" cy="1197" r="7.2" fill="url(#hole)" opacity="0.67"/><circle cx="526.4" cy="1197" r="7.2" fill="url(#hole)" opacity="0.69"/><circle cx="545.1" cy="1197" r="7.2" fill="url(#hole)" opacity="0.71"/><circle cx="563.9" cy="1197" r="7.2" fill="url(#hole)" opacity="0.72"/><circle cx="582.6" cy="1197" r="7.2" fill="url(#hole)" opacity="0.74"/><circle cx="601.4" cy="1197" r="7.2" fill="url(#hole)" opacity="0.76"/><circle cx="620.2" cy="1197" r="7.2" fill="url(#hole)" opacity="0.78"/><circle cx="638.9" cy="1197" r="7.2" fill="url(#hole)" opacity="0.79"/><circle cx="657.7" cy="1197" r="7.2" fill="url(#hole)" opacity="0.81"/><circle cx="676.4" cy="1197" r="7.2" fill="url(#hole)" opacity="0.83"/><circle cx="695.2" cy="1197" r="7.2" fill="url(#hole)" opacity="0.84"/><circle cx="714.0" cy="1197" r="7.2" fill="url(#hole)" opacity="0.86"/><circle cx="732.7" cy="1197" r="7.2" fill="url(#hole)" opacity="0.88"/><circle cx="751.5" cy="1197" r="7.2" fill="url(#hole)" opacity="0.90"/><circle cx="770.2" cy="1197" r="7.2" fill="url(#hole)" opacity="0.91"/><circle cx="789.0" cy="1197" r="7.2" fill="url(#hole)" opacity="0.93"/><circle cx="807.8" cy="1197" r="7.2" fill="url(#hole)" opacity="0.95"/><circle cx="826.5" cy="1197" r="7.2" fill="url(#hole)" opacity="0.97"/><circle cx="845.3" cy="1197" r="7.2" fill="url(#hole)" opacity="0.98"/><circle cx="864.0" cy="1197" r="7.2" fill="url(#hole)" opacity="1.00"/><circle cx="320.0" cy="1250" r="7.2" fill="url(#hole)" opacity="0.50"/><circle cx="338.8" cy="1250" r="7.2" fill="url(#hole)" opacity="0.52"/><circle cx="357.5" cy="1250" r="7.2" fill="url(#hole)" opacity="0.53"/><circle cx="376.3" cy="1250" r="7.2" fill="url(#hole)" opacity="0.55"/><circle cx="395.0" cy="1250" r="7.2" fill="url(#hole)" opacity="0.57"/><circle cx="413.8" cy="1250" r="7.2" fill="url(#hole)" opacity="0.59"/><circle cx="432.6" cy="1250" r="7.2" fill="url(#hole)" opacity="0.60"/><circle cx="451.3" cy="1250" r="7.2" fill="url(#hole)" opacity="0.62"/><circle cx="470.1" cy="1250" r="7.2" fill="url(#hole)" opacity="0.64"/><circle cx="488.8" cy="1250" r="7.2" fill="url(#hole)" opacity="0.66"/><circle cx="507.6" cy="1250" r="7.2" fill="url(#hole)" opacity="0.67"/><circle cx="526.4" cy="1250" r="7.2" fill="url(#hole)" opacity="0.69"/><circle cx="545.1" cy="1250" r="7.2" fill="url(#hole)" opacity="0.71"/><circle cx="563.9" cy="1250" r="7.2" fill="url(#hole)" opacity="0.72"/><circle cx="582.6" cy="1250" r="7.2" fill="url(#hole)" opacity="0.74"/><circle cx="601.4" cy="1250" r="7.2" fill="url(#hole)" opacity="0.76"/><circle cx="620.2" cy="1250" r="7.2" fill="url(#hole)" opacity="0.78"/><circle cx="638.9" cy="1250" r="7.2" fill="url(#hole)" opacity="0.79"/><circle cx="657.7" cy="1250" r="7.2" fill="url(#hole)" opacity="0.81"/><circle cx="676.4" cy="1250" r="7.2" fill="url(#hole)" opacity="0.83"/><circle cx="695.2" cy="1250" r="7.2" fill="url(#hole)" opacity="0.84"/><circle cx="714.0" cy="1250" r="7.2" fill="url(#hole)" opacity="0.86"/><circle cx="732.7" cy="1250" r="7.2" fill="url(#hole)" opacity="0.88"/><circle cx="751.5" cy="1250" r="7.2" fill="url(#hole)" opacity="0.90"/><circle cx="770.2" cy="1250" r="7.2" fill="url(#hole)" opacity="0.91"/><circle cx="789.0" cy="1250" r="7.2" fill="url(#hole)" opacity="0.93"/><circle cx="807.8" cy="1250" r="7.2" fill="url(#hole)" opacity="0.95"/><circle cx="826.5" cy="1250" r="7.2" fill="url(#hole)" opacity="0.97"/><circle cx="845.3" cy="1250" r="7.2" fill="url(#hole)" opacity="0.98"/><circle cx="864.0" cy="1250" r="7.2" fill="url(#hole)" opacity="1.00"/>
<text x="305" y="923.5" text-anchor="middle" font-family="Liberation Sans" font-size="17" fill="#b43a0e">+</text>
<text x="305" y="941.5" text-anchor="middle" font-family="Liberation Sans" font-size="17" fill="#b43a0e">-</text>
<text x="879" y="923.5" text-anchor="middle" font-family="Liberation Sans" font-size="17" fill="#b43a0e">+</text>
<text x="879" y="941.5" text-anchor="middle" font-family="Liberation Sans" font-size="17" fill="#b43a0e">-</text>
<text x="305" y="1255.5" text-anchor="middle" font-family="Liberation Sans" font-size="17" fill="#b43a0e">+</text>
<text x="881" y="1255.5" text-anchor="middle" font-family="Liberation Sans" font-size="17" fill="#b43a0e">+</text>
<text x="332" y="903" font-family="Liberation Sans" font-size="9" font-weight="bold" fill="#b43a0e" textLength="74" lengthAdjust="spacingAndGlyphs">187755AP15-230918</text>
<text transform="translate(314.7 955) rotate(90)" font-family="Liberation Sans" font-size="15" fill="#b43a0e">30</text><text transform="translate(314.7 1216) rotate(90)" font-family="Liberation Sans" font-size="15" fill="#b43a0e">30</text><text transform="translate(333.5 955) rotate(90)" font-family="Liberation Sans" font-size="15" fill="#b43a0e">29</text><text transform="translate(333.5 1216) rotate(90)" font-family="Liberation Sans" font-size="15" fill="#b43a0e">29</text><text transform="translate(352.2 955) rotate(90)" font-family="Liberation Sans" font-size="15" fill="#b43a0e">28</text><text transform="translate(352.2 1216) rotate(90)" font-family="Liberation Sans" font-size="15" fill="#b43a0e">28</text><text transform="translate(371.0 955) rotate(90)" font-family="Liberation Sans" font-size="15" fill="#b43a0e">27</text><text transform="translate(371.0 1216) rotate(90)" font-family="Liberation Sans" font-size="15" fill="#b43a0e">27</text><text transform="translate(389.7 955) rotate(90)" font-family="Liberation Sans" font-size="15" fill="#b43a0e">26</text><text transform="translate(389.7 1216) rotate(90)" font-family="Liberation Sans" font-size="15" fill="#b43a0e">26</text><text transform="translate(408.5 955) rotate(90)" font-family="Liberation Sans" font-size="15" fill="#b43a0e">25</text><text transform="translate(408.5 1216) rotate(90)" font-family="Liberation Sans" font-size="15" fill="#b43a0e">25</text><text transform="translate(427.3 955) rotate(90)" font-family="Liberation Sans" font-size="15" fill="#b43a0e">24</text><text transform="translate(427.3 1216) rotate(90)" font-family="Liberation Sans" font-size="15" fill="#b43a0e">24</text><text transform="translate(446.0 955) rotate(90)" font-family="Liberation Sans" font-size="15" fill="#b43a0e">23</text><text transform="translate(446.0 1216) rotate(90)" font-family="Liberation Sans" font-size="15" fill="#b43a0e">23</text><text transform="translate(464.8 955) rotate(90)" font-family="Liberation Sans" font-size="15" fill="#b43a0e">22</text><text transform="translate(464.8 1216) rotate(90)" font-family="Liberation Sans" font-size="15" fill="#b43a0e">22</text><text transform="translate(483.5 955) rotate(90)" font-family="Liberation Sans" font-size="15" fill="#b43a0e">21</text><text transform="translate(483.5 1216) rotate(90)" font-family="Liberation Sans" font-size="15" fill="#b43a0e">21</text><text transform="translate(502.3 955) rotate(90)" font-family="Liberation Sans" font-size="15" fill="#b43a0e">20</text><text transform="translate(502.3 1216) rotate(90)" font-family="Liberation Sans" font-size="15" fill="#b43a0e">20</text><text transform="translate(521.1 955) rotate(90)" font-family="Liberation Sans" font-size="15" fill="#b43a0e">19</text><text transform="translate(521.1 1216) rotate(90)" font-family="Liberation Sans" font-size="15" fill="#b43a0e">19</text><text transform="translate(539.8 955) rotate(90)" font-family="Liberation Sans" font-size="15" fill="#b43a0e">18</text><text transform="translate(539.8 1216) rotate(90)" font-family="Liberation Sans" font-size="15" fill="#b43a0e">18</text><text transform="translate(558.6 955) rotate(90)" font-family="Liberation Sans" font-size="15" fill="#b43a0e">17</text><text transform="translate(558.6 1216) rotate(90)" font-family="Liberation Sans" font-size="15" fill="#b43a0e">17</text><text transform="translate(577.3 955) rotate(90)" font-family="Liberation Sans" font-size="15" fill="#b43a0e">16</text><text transform="translate(577.3 1216) rotate(90)" font-family="Liberation Sans" font-size="15" fill="#b43a0e">16</text><text transform="translate(596.1 955) rotate(90)" font-family="Liberation Sans" font-size="15" fill="#b43a0e">15</text><text transform="translate(596.1 1216) rotate(90)" font-family="Liberation Sans" font-size="15" fill="#b43a0e">15</text><text transform="translate(614.9 955) rotate(90)" font-family="Liberation Sans" font-size="15" fill="#b43a0e">14</text><text transform="translate(614.9 1216) rotate(90)" font-family="Liberation Sans" font-size="15" fill="#b43a0e">14</text><text transform="translate(633.6 955) rotate(90)" font-family="Liberation Sans" font-size="15" fill="#b43a0e">13</text><text transform="translate(633.6 1216) rotate(90)" font-family="Liberation Sans" font-size="15" fill="#b43a0e">13</text><text transform="translate(652.4 955) rotate(90)" font-family="Liberation Sans" font-size="15" fill="#b43a0e">12</text><text transform="translate(652.4 1216) rotate(90)" font-family="Liberation Sans" font-size="15" fill="#b43a0e">12</text><text transform="translate(671.1 955) rotate(90)" font-family="Liberation Sans" font-size="15" fill="#b43a0e">11</text><text transform="translate(671.1 1216) rotate(90)" font-family="Liberation Sans" font-size="15" fill="#b43a0e">11</text><text transform="translate(689.9 955) rotate(90)" font-family="Liberation Sans" font-size="15" fill="#b43a0e">10</text><text transform="translate(689.9 1216) rotate(90)" font-family="Liberation Sans" font-size="15" fill="#b43a0e">10</text><text transform="translate(708.7 955) rotate(90)" font-family="Liberation Sans" font-size="15" fill="#b43a0e">9</text><text transform="translate(708.7 1216) rotate(90)" font-family="Liberation Sans" font-size="15" fill="#b43a0e">9</text><text transform="translate(727.4 955) rotate(90)" font-family="Liberation Sans" font-size="15" fill="#b43a0e">8</text><text transform="translate(727.4 1216) rotate(90)" font-family="Liberation Sans" font-size="15" fill="#b43a0e">8</text><text transform="translate(746.2 955) rotate(90)" font-family="Liberation Sans" font-size="15" fill="#b43a0e">7</text><text transform="translate(746.2 1216) rotate(90)" font-family="Liberation Sans" font-size="15" fill="#b43a0e">7</text><text transform="translate(764.9 955) rotate(90)" font-family="Liberation Sans" font-size="15" fill="#b43a0e">6</text><text transform="translate(764.9 1216) rotate(90)" font-family="Liberation Sans" font-size="15" fill="#b43a0e">6</text><text transform="translate(783.7 955) rotate(90)" font-family="Liberation Sans" font-size="15" fill="#b43a0e">5</text><text transform="translate(783.7 1216) rotate(90)" font-family="Liberation Sans" font-size="15" fill="#b43a0e">5</text><text transform="translate(802.5 955) rotate(90)" font-family="Liberation Sans" font-size="15" fill="#b43a0e">4</text><text transform="translate(802.5 1216) rotate(90)" font-family="Liberation Sans" font-size="15" fill="#b43a0e">4</text><text transform="translate(821.2 955) rotate(90)" font-family="Liberation Sans" font-size="15" fill="#b43a0e">3</text><text transform="translate(821.2 1216) rotate(90)" font-family="Liberation Sans" font-size="15" fill="#b43a0e">3</text><text transform="translate(840.0 955) rotate(90)" font-family="Liberation Sans" font-size="15" fill="#b43a0e">2</text><text transform="translate(840.0 1216) rotate(90)" font-family="Liberation Sans" font-size="15" fill="#b43a0e">2</text><text transform="translate(858.7 955) rotate(90)" font-family="Liberation Sans" font-size="15" fill="#b43a0e">1</text><text transform="translate(858.7 1216) rotate(90)" font-family="Liberation Sans" font-size="15" fill="#b43a0e">1</text><text transform="translate(300.5 990) rotate(90)" text-anchor="middle" font-family="Liberation Sans" font-size="15" fill="#b43a0e">a</text><text transform="translate(875 990) rotate(90)" text-anchor="middle" font-family="Liberation Sans" font-size="15" fill="#b43a0e">a</text><text transform="translate(300.5 1008.5) rotate(90)" text-anchor="middle" font-family="Liberation Sans" font-size="15" fill="#b43a0e">b</text><text transform="translate(875 1008.5) rotate(90)" text-anchor="middle" font-family="Liberation Sans" font-size="15" fill="#b43a0e">b</text><text transform="translate(300.5 1027) rotate(90)" text-anchor="middle" font-family="Liberation Sans" font-size="15" fill="#b43a0e">c</text><text transform="translate(875 1027) rotate(90)" text-anchor="middle" font-family="Liberation Sans" font-size="15" fill="#b43a0e">c</text><text transform="translate(300.5 1046) rotate(90)" text-anchor="middle" font-family="Liberation Sans" font-size="15" fill="#b43a0e">d</text><text transform="translate(875 1046) rotate(90)" text-anchor="middle" font-family="Liberation Sans" font-size="15" fill="#b43a0e">d</text><text transform="translate(300.5 1064) rotate(90)" text-anchor="middle" font-family="Liberation Sans" font-size="15" fill="#b43a0e">e</text><text transform="translate(875 1064) rotate(90)" text-anchor="middle" font-family="Liberation Sans" font-size="15" fill="#b43a0e">e</text><text transform="translate(300.5 1122) rotate(90)" text-anchor="middle" font-family="Liberation Sans" font-size="15" fill="#b43a0e">f</text><text transform="translate(875 1122) rotate(90)" text-anchor="middle" font-family="Liberation Sans" font-size="15" fill="#b43a0e">f</text><text transform="translate(300.5 1141) rotate(90)" text-anchor="middle" font-family="Liberation Sans" font-size="15" fill="#b43a0e">g</text><text transform="translate(875 1141) rotate(90)" text-anchor="middle" font-family="Liberation Sans" font-size="15" fill="#b43a0e">g</text><text transform="translate(300.5 1160) rotate(90)" text-anchor="middle" font-family="Liberation Sans" font-size="15" fill="#b43a0e">h</text><text transform="translate(875 1160) rotate(90)" text-anchor="middle" font-family="Liberation Sans" font-size="15" fill="#b43a0e">h</text><text transform="translate(300.5 1179) rotate(90)" text-anchor="middle" font-family="Liberation Sans" font-size="15" fill="#b43a0e">i</text><text transform="translate(875 1179) rotate(90)" text-anchor="middle" font-family="Liberation Sans" font-size="15" fill="#b43a0e">i</text><text transform="translate(300.5 1197) rotate(90)" text-anchor="middle" font-family="Liberation Sans" font-size="15" fill="#b43a0e">j</text><text transform="translate(875 1197) rotate(90)" text-anchor="middle" font-family="Liberation Sans" font-size="15" fill="#b43a0e">j</text>
<circle cx="376.5" cy="1093" r="12" fill="#c83a04"/>
<circle cx="807" cy="1094" r="12" fill="#d03c04"/>
<text x="534" y="1106" font-family="Liberation Sans" font-size="32" font-weight="bold" fill="#c0400e" textLength="114" lengthAdjust="spacingAndGlyphs">DIKAVS</text>
</g>
</svg>
<div style="position:absolute;left:2px;top:1565px;width:1895px;height:55px;border-radius:0 0 8px 8px;background:#f0f0f0"></div>
<div class="t" style="top:1590.92px;left:17.5px;font-size:21px;color:#000;">Black Level:</div>
<div style="position:absolute;left:128.5px;top:1578px;width:1px;height:42px;background:#d6d6d6"></div>
<div style="position:absolute;left:134.8px;top:1586px;width:162.5px;height:27.200000000000045px;background:linear-gradient(#f4f4f4,#e6e6e6);border:1px solid #c8c8c8;border-radius:4px"></div>
<div class="t" style="top:1592.06px;left:16px;width:400px;text-align:center;font-size:16px;color:#000;">Auto (255)</div>
<div style="position:absolute;left:300px;top:1578px;width:1px;height:42px;background:#d6d6d6"></div>
<div class="t" style="top:1591.12px;left:318px;font-size:21px;color:#000;">Raw Curve:</div>
<div style="position:absolute;left:426.2px;top:1578px;width:1px;height:42px;background:#d6d6d6"></div>
<div style="position:absolute;left:432.8px;top:1586px;width:32.19999999999999px;height:27px;background:#ececec;border:1px solid #e0e0e0;border-radius:4px"></div>
<div class="t" style="top:1592.06px;left:249px;width:400px;text-align:center;font-size:16px;color:#8a8a8a;">N/A</div>
<div style="position:absolute;left:468.8px;top:1578px;width:1px;height:42px;background:#d6d6d6"></div>
<div style="position:absolute;left:671.4px;top:1578px;width:1px;height:42px;background:#d6d6d6"></div>
<div style="position:absolute;left:677.4px;top:1585.5px;width:20.899999999999977px;height:27.700000000000045px;background:linear-gradient(#f4f4f4,#e6e6e6);border:1px solid #c8c8c8;border-radius:4px"></div>
<div class="t" style="top:1592.06px;left:488px;width:400px;text-align:center;font-size:16px;color:#000;">-</div>
<div style="position:absolute;left:706.4px;top:1582.9px;width:169.70000000000005px;height:34.5px;background:linear-gradient(#f4f4f4,#e6e6e6);border:1px solid #c8c8c8;border-radius:4px"></div>
<div class="t" style="top:1590.28px;left:711.2px;font-size:22px;color:#000;">Fit to Window</div>
<svg style="left:857px;top:1596px" width="12" height="8" viewBox="0 0 12 8"><path d="M1 1.5 L6 6.5 L11 1.5" stroke="#555" stroke-width="1.1" fill="none"/></svg>
<div style="position:absolute;left:878.4px;top:1578px;width:1px;height:42px;background:#d6d6d6"></div>
<div style="position:absolute;left:884.6px;top:1585.5px;width:26.600000000000023px;height:27.700000000000045px;background:linear-gradient(#f4f4f4,#e6e6e6);border:1px solid #c8c8c8;border-radius:4px"></div>
<div class="t" style="top:1590.76px;left:698px;width:400px;text-align:center;font-size:18px;color:#000;">+</div>
<div style="position:absolute;left:914px;top:1578px;width:1px;height:42px;background:#d6d6d6"></div>
<div class="t" style="top:1591.12px;left:932px;font-size:21px;color:#000;">Frame:</div>
<div style="position:absolute;left:998.4px;top:1578px;width:1px;height:42px;background:#d6d6d6"></div>
<div style="position:absolute;left:1003.8px;top:1582.6px;width:86.79999999999995px;height:34.200000000000045px;background:#ececec;border:1px solid #e2e2e2;border-radius:4px"></div>
<div class="t" style="top:1590.52px;left:1008.4px;font-size:21px;color:#8a8a8a;">1</div>
<svg style="left:1072px;top:1596px" width="12" height="8" viewBox="0 0 12 8"><path d="M1 1.5 L6 6.5 L11 1.5" stroke="#aaa" stroke-width="1.1" fill="none"/></svg>
<div style="position:absolute;left:1092.7px;top:1578px;width:1px;height:42px;background:#d6d6d6"></div>
<div style="position:absolute;left:1118.4px;top:1578px;width:1px;height:42px;background:#d6d6d6"></div>
<div style="position:absolute;left:1123.2px;top:1581.6px;width:257.6px;height:35.2px;border:1px solid #dedede"></div>
<div style="position:absolute;left:1124.3px;top:1590.4px;width:20px;height:19.2px;border:1px solid #555;border-radius:3px;background:#f6f6f6"></div>
<div class="t" style="top:1590.52px;left:1153.3px;font-size:21px;color:#000;">Brighten:</div>
<div class="t" style="top:1590.52px;left:1256.6px;font-size:21px;color:#8a8a8a;">0.00</div>
<svg style="left:1305px;top:1584px" width="15" height="32" viewBox="0 0 15 32"><rect x="0.5" y="0.5" width="14" height="31" fill="#ececec" stroke="#dcdcdc"/><path d="M3.5 8 L7.5 4 L11.5 8 Z M3.5 22 L7.5 26 L11.5 22 Z" fill="#555"/></svg>
<div style="position:absolute;left:1332.8px;top:1585.8px;width:45.200000000000045px;height:27.40000000000009px;background:#ececec;border:1px solid #e4e4e4;border-radius:4px"></div>
<div class="t" style="top:1590.12px;left:1155.4px;width:400px;text-align:center;font-size:19px;color:#8a8a8a;">Apply</div>
<div style="position:absolute;left:1874.7px;top:1578px;width:1px;height:42px;background:#d6d6d6"></div>
<svg style="left:1882px;top:1606px" width="12" height="12" viewBox="0 0 12 12"><g fill="#9a9a9a"><rect x="9" y="0" width="2" height="2"/><rect x="6" y="3" width="2" height="2"/><rect x="9" y="3" width="2" height="2"/><rect x="3" y="6" width="2" height="2"/><rect x="6" y="6" width="2" height="2"/><rect x="9" y="6" width="2" height="2"/><rect x="0" y="9" width="2" height="2"/><rect x="3" y="9" width="2" height="2"/><rect x="6" y="9" width="2" height="2"/><rect x="9" y="9" width="2" height="2"/></g></svg>
<div style="position:absolute;left:84px;top:1259px;width:1497px;height:294px;background:#f0f0f0;border-radius:8px;box-shadow:0 12px 40px -14px rgba(0,0,0,0.4),0 70px 60px -30px rgba(0,0,0,0.26),0 0 0 1px rgba(0,0,0,0.2)"></div>
<div style="position:absolute;left:84px;top:1259px;width:1497px;height:42px;background:#f3f3f3;border-radius:8px 8px 0 0"></div>
<svg style="left:95px;top:1268px" width="24" height="21" viewBox="0 0 24 21">
<polygon points="12,0 23,20 6,20" fill="#e94b25"/>
<polygon points="0,20 9.5,3 10.6,4.8 2,20" fill="#222"/>
<path d="M9.5 20 L10 13.5 Q10.5 11.8 12.2 12 Q14 12.4 13.6 14.6 Q13 16.5 10.3 16" stroke="#fff" stroke-width="1.1" fill="none" opacity="0.85"/>
</svg>
<div class="t" style="top:1269.92px;left:124.8px;font-size:21px;color:#000;">Samples</div>
<div style="position:absolute;left:1399px;top:1279px;width:15px;height:1.2px;background:#222"></div>
<div style="position:absolute;left:1468px;top:1273px;width:15px;height:14px;border:1.4px solid #222;border-radius:1px"></div>
<svg style="left:1538px;top:1272px" width="16" height="16" viewBox="0 0 16 16"><path d="M0.5 0.5 L15.5 15.5 M15.5 0.5 L0.5 15.5" stroke="#222" stroke-width="1.3"/></svg>
<div style="position:absolute;left:101.2px;top:1319.6px;width:199.60000000000002px;height:31px;background:#fdfdfd;border:1px solid #d0d0d0;border-radius:4px;box-shadow:0 1px 0 #c4c4c4;"></div>
<div class="t" style="top:1328.68px;left:1.0px;width:400px;text-align:center;font-size:15.5px;color:#000;">Save Samples</div>
<div style="position:absolute;left:312.6px;top:1319.6px;width:197.39999999999998px;height:31px;background:#f8f8f8;border:1px solid #e6e6e6;border-radius:4px;"></div>
<div class="t" style="top:1328.68px;left:211.3px;width:400px;text-align:center;font-size:15.5px;color:#8a8a8a;">Histogram</div>
<div style="position:absolute;left:522.9px;top:1319.6px;width:198.10000000000002px;height:31px;background:#f8f8f8;border:1px solid #e6e6e6;border-radius:4px;"></div>
<div class="t" style="top:1328.68px;left:421.95000000000005px;width:400px;text-align:center;font-size:15.5px;color:#8a8a8a;">Remove Sel.</div>
<div style="position:absolute;left:733.9px;top:1319.6px;width:197.39999999999998px;height:31px;background:#f8f8f8;border:1px solid #e6e6e6;border-radius:4px;"></div>
<div class="t" style="top:1328.68px;left:632.5999999999999px;width:400px;text-align:center;font-size:15.5px;color:#8a8a8a;">Sel. to Clipboard</div>
<div style="position:absolute;left:943.3px;top:1319.6px;width:199.10000000000014px;height:31px;background:#fdfdfd;border:1px solid #d0d0d0;border-radius:4px;box-shadow:0 1px 0 #c4c4c4;"></div>
<div class="t" style="top:1328.68px;left:842.8499999999999px;width:400px;text-align:center;font-size:15.5px;color:#000;">Remove All</div>
<div style="position:absolute;left:1154px;top:1319.6px;width:198.4000000000001px;height:31px;background:#fdfdfd;border:1px solid #d0d0d0;border-radius:4px;box-shadow:0 1px 0 #c4c4c4;"></div>
<div class="t" style="top:1328.68px;left:1053.2px;width:400px;text-align:center;font-size:15.5px;color:#000;">Load</div>
<div style="position:absolute;left:100.4px;top:1362.3px;width:19.2px;height:19.2px;border:1px solid #d4d4d4;border-radius:3px;background:#f8f8f8"></div>
<div class="t" style="top:1365.46px;left:128.9px;font-size:16px;color:#8a8a8a;">Append File</div>
<svg style="left:732px;top:1362px" width="20" height="20" viewBox="0 0 20 20"><rect x="0" y="0" width="20" height="20" rx="3" fill="#c8c8c8"/><path d="M5.5 10 L8.6 13 L14.5 7" stroke="#fff" stroke-width="1.3" fill="none"/></svg>
<div class="t" style="top:1365.46px;left:760px;font-size:16px;color:#8a8a8a;">Header to Clipboard</div>
<div style="position:absolute;left:100.5px;top:1393.3px;width:1464.0px;height:143.10000000000014px;background:#f0f0f0;border:1px solid #8c8c8c"></div>
<div style="position:absolute;left:1547px;top:1394px;width:17px;height:41px;background:#fff"></div>
<div style="position:absolute;left:321.4px;top:1394px;width:69.0px;height:41px;background:#f0f0f0;border-right:1.5px solid #6a6a6a;border-bottom:1.5px solid #6a6a6a;box-shadow:inset 1px 1px 0 #fff"></div>
<div class="t" style="top:1406.22px;left:155.89999999999998px;width:400px;text-align:center;font-size:21px;color:#000;">ID</div>
<div style="position:absolute;left:390.4px;top:1394px;width:68.90000000000003px;height:41px;background:#f0f0f0;border-right:1.5px solid #6a6a6a;border-bottom:1.5px solid #6a6a6a;box-shadow:inset 1px 1px 0 #fff"></div>
<div class="t" style="top:1406.22px;left:224.85000000000002px;width:400px;text-align:center;font-size:21px;color:#000;">Rmin</div>
<div style="position:absolute;left:459.3px;top:1394px;width:69.19999999999999px;height:41px;background:#f0f0f0;border-right:1.5px solid #6a6a6a;border-bottom:1.5px solid #6a6a6a;box-shadow:inset 1px 1px 0 #fff"></div>
<div class="t" style="top:1406.22px;left:293.9px;width:400px;text-align:center;font-size:21px;color:#000;">Ravg</div>
<div style="position:absolute;left:528.5px;top:1394px;width:69.5px;height:41px;background:#f0f0f0;border-right:1.5px solid #6a6a6a;border-bottom:1.5px solid #6a6a6a;box-shadow:inset 1px 1px 0 #fff"></div>
<div class="t" style="top:1406.22px;left:363.25px;width:400px;text-align:center;font-size:21px;color:#000;">Rmax</div>
<div style="position:absolute;left:598px;top:1394px;width:69.29999999999995px;height:41px;background:#f0f0f0;border-right:1.5px solid #6a6a6a;border-bottom:1.5px solid #6a6a6a;box-shadow:inset 1px 1px 0 #fff"></div>
<div class="t" style="top:1406.22px;left:432.65px;width:400px;text-align:center;font-size:21px;color:#000;">Rdev</div>
<div style="position:absolute;left:667.3px;top:1394px;width:69.20000000000005px;height:41px;background:#f0f0f0;border-right:1.5px solid #6a6a6a;border-bottom:1.5px solid #6a6a6a;box-shadow:inset 1px 1px 0 #fff"></div>
<div class="t" style="top:1406.22px;left:501.9px;width:400px;text-align:center;font-size:21px;color:#000;">Gmin</div>
<div style="position:absolute;left:736.5px;top:1394px;width:68.5px;height:41px;background:#f0f0f0;border-right:1.5px solid #6a6a6a;border-bottom:1.5px solid #6a6a6a;box-shadow:inset 1px 1px 0 #fff"></div>
<div class="t" style="top:1406.22px;left:570.75px;width:400px;text-align:center;font-size:21px;color:#000;">Gavg</div>
<div style="position:absolute;left:805px;top:1394px;width:72.20000000000005px;height:41px;background:#f0f0f0;border-right:1.5px solid #6a6a6a;border-bottom:1.5px solid #6a6a6a;box-shadow:inset 1px 1px 0 #fff"></div>
<div class="t" style="top:1406.22px;left:641.1px;width:400px;text-align:center;font-size:21px;color:#000;">Gmax</div>
<div style="position:absolute;left:877.2px;top:1394px;width:69.29999999999995px;height:41px;background:#f0f0f0;border-right:1.5px solid #6a6a6a;border-bottom:1.5px solid #6a6a6a;box-shadow:inset 1px 1px 0 #fff"></div>
<div class="t" style="top:1406.22px;left:711.85px;width:400px;text-align:center;font-size:21px;color:#000;">Gdev</div>
<div style="position:absolute;left:946.5px;top:1394px;width:69.0px;height:41px;background:#f0f0f0;border-right:1.5px solid #6a6a6a;border-bottom:1.5px solid #6a6a6a;box-shadow:inset 1px 1px 0 #fff"></div>
<div class="t" style="top:1406.22px;left:781.0px;width:400px;text-align:center;font-size:21px;color:#000;">Bmin</div>
<div style="position:absolute;left:1015.5px;top:1394px;width:68.79999999999995px;height:41px;background:#f0f0f0;border-right:1.5px solid #6a6a6a;border-bottom:1.5px solid #6a6a6a;box-shadow:inset 1px 1px 0 #fff"></div>
<div class="t" style="top:1406.22px;left:849.9000000000001px;width:400px;text-align:center;font-size:21px;color:#000;">Bavg</div>
<div style="position:absolute;left:1084.3px;top:1394px;width:70.10000000000014px;height:41px;background:#f0f0f0;border-right:1.5px solid #6a6a6a;border-bottom:1.5px solid #6a6a6a;box-shadow:inset 1px 1px 0 #fff"></div>
<div class="t" style="top:1406.22px;left:919.3499999999999px;width:400px;text-align:center;font-size:21px;color:#000;">Bmax</div>
<div style="position:absolute;left:1154.4px;top:1394px;width:68.59999999999991px;height:41px;background:#f0f0f0;border-right:1.5px solid #6a6a6a;border-bottom:1.5px solid #6a6a6a;box-shadow:inset 1px 1px 0 #fff"></div>
<div class="t" style="top:1406.22px;left:988.7px;width:400px;text-align:center;font-size:21px;color:#000;">Bdev</div>
<div style="position:absolute;left:1223px;top:1394px;width:80px;height:41px;background:#f0f0f0;border-right:1.5px solid #6a6a6a;border-bottom:1.5px solid #6a6a6a;box-shadow:inset 1px 1px 0 #fff"></div>
<div class="t" style="top:1406.22px;left:1063.0px;width:400px;text-align:center;font-size:21px;color:#000;">G2min</div>
<div style="position:absolute;left:1303px;top:1394px;width:79.20000000000005px;height:41px;background:#f0f0f0;border-right:1.5px solid #6a6a6a;border-bottom:1.5px solid #6a6a6a;box-shadow:inset 1px 1px 0 #fff"></div>
<div class="t" style="top:1406.22px;left:1142.6px;width:400px;text-align:center;font-size:21px;color:#000;">G2avg</div>
<div style="position:absolute;left:1382.2px;top:1394px;width:85.29999999999995px;height:41px;background:#f0f0f0;border-right:1.5px solid #6a6a6a;border-bottom:1.5px solid #6a6a6a;box-shadow:inset 1px 1px 0 #fff"></div>
<div class="t" style="top:1406.22px;left:1224.85px;width:400px;text-align:center;font-size:21px;color:#000;">G2max</div>
<div style="position:absolute;left:1467.5px;top:1394px;width:79.20000000000005px;height:41px;background:#f0f0f0;border-right:1.5px solid #6a6a6a;border-bottom:1.5px solid #6a6a6a;box-shadow:inset 1px 1px 0 #fff"></div>
<div class="t" style="top:1406.22px;left:1307.1px;width:400px;text-align:center;font-size:21px;color:#000;">G2dev</div>
<div style="position:absolute;left:101.5px;top:1394px;width:220px;height:41px;background:#f0f0f0"></div>
<div style="position:absolute;left:101.5px;top:1435px;width:220px;height:45px;background:#f0f0f0;border-bottom:1.5px solid #6a6a6a;border-right:1.5px solid #6a6a6a;box-shadow:inset 0 1px 0 #fff"></div>
<div class="t" style="top:1451.56px;left:108px;font-size:16px;color:#000;">2846:804-500x500</div>
<div style="position:absolute;left:321.4px;top:1435px;width:69.0px;height:45px;background:#f0f0f0;border-right:1px solid #a0a0a0;border-bottom:1px solid #a0a0a0"></div>
<div class="t" style="top:1448.82px;left:325.4px;font-size:21px;color:#000;">1</div>
<div style="position:absolute;left:390.4px;top:1435px;width:68.90000000000003px;height:45px;background:#fdeeee;border-right:1px solid #a0a0a0;border-bottom:1px solid #a0a0a0"></div>
<div class="t" style="top:1448.82px;right:1443.7px;font-size:21px;color:#1c1ccc;">493</div>
<div style="position:absolute;left:459.3px;top:1435px;width:69.19999999999999px;height:45px;background:#fdeeee;border-right:1px solid #a0a0a0;border-bottom:1px solid #a0a0a0"></div>
<div class="t" style="top:1448.82px;right:1374.5px;font-size:21px;color:#000;">785.8</div>
<div style="position:absolute;left:528.5px;top:1435px;width:69.5px;height:45px;background:#fdeeee;border-right:1px solid #a0a0a0;border-bottom:1px solid #a0a0a0"></div>
<div class="t" style="top:1448.82px;right:1305px;font-size:21px;color:#1a8a1a;">1350</div>
<div style="position:absolute;left:598px;top:1435px;width:69.29999999999995px;height:45px;background:#fdeeee;border-right:1px solid #a0a0a0;border-bottom:1px solid #a0a0a0"></div>
<div class="t" style="top:1448.82px;right:1235.7px;font-size:21px;color:#000;">51.6</div>
<div style="position:absolute;left:667.3px;top:1435px;width:69.20000000000005px;height:45px;background:#f0fff0;border-right:1px solid #a0a0a0;border-bottom:1px solid #a0a0a0"></div>
<div class="t" style="top:1448.82px;right:1166.5px;font-size:21px;color:#1c1ccc;">183</div>
<div style="position:absolute;left:736.5px;top:1435px;width:68.5px;height:45px;background:#f0fff0;border-right:1px solid #a0a0a0;border-bottom:1px solid #a0a0a0"></div>
<div class="t" style="top:1448.82px;right:1098px;font-size:21px;color:#000;">339.5</div>
<div style="position:absolute;left:805px;top:1435px;width:72.20000000000005px;height:45px;background:#f0fff0;border-right:1px solid #a0a0a0;border-bottom:1px solid #a0a0a0"></div>
<div class="t" style="top:1448.82px;right:1025.8px;font-size:21px;color:#1a8a1a;">552</div>
<div style="position:absolute;left:877.2px;top:1435px;width:69.29999999999995px;height:45px;background:#f0fff0;border-right:1px solid #a0a0a0;border-bottom:1px solid #a0a0a0"></div>
<div class="t" style="top:1448.82px;right:956.5px;font-size:21px;color:#000;">25.4</div>
<div style="position:absolute;left:946.5px;top:1435px;width:69.0px;height:45px;background:#f0f0ff;border-right:1px solid #a0a0a0;border-bottom:1px solid #a0a0a0"></div>
<div class="t" style="top:1448.82px;right:887.5px;font-size:21px;color:#1c1ccc;">0</div>
<div style="position:absolute;left:1015.5px;top:1435px;width:68.79999999999995px;height:45px;background:#f0f0ff;border-right:1px solid #a0a0a0;border-bottom:1px solid #a0a0a0"></div>
<div class="t" style="top:1448.82px;right:818.7px;font-size:21px;color:#000;">25.1</div>
<div style="position:absolute;left:1084.3px;top:1435px;width:70.10000000000014px;height:45px;background:#f0f0ff;border-right:1px solid #a0a0a0;border-bottom:1px solid #a0a0a0"></div>
<div class="t" style="top:1448.82px;right:748.5999999999999px;font-size:21px;color:#1a8a1a;">56</div>
<div style="position:absolute;left:1154.4px;top:1435px;width:68.59999999999991px;height:45px;background:#f0f0ff;border-right:1px solid #a0a0a0;border-bottom:1px solid #a0a0a0"></div>
<div class="t" style="top:1448.82px;right:680px;font-size:21px;color:#000;">5.07</div>
<div style="position:absolute;left:1223px;top:1435px;width:80px;height:45px;background:#f0fff0;border-right:1px solid #a0a0a0;border-bottom:1px solid #a0a0a0"></div>
<div class="t" style="top:1448.82px;right:600px;font-size:21px;color:#1c1ccc;">196</div>
<div style="position:absolute;left:1303px;top:1435px;width:79.20000000000005px;height:45px;background:#f0fff0;border-right:1px solid #a0a0a0;border-bottom:1px solid #a0a0a0"></div>
<div class="t" style="top:1448.82px;right:520.8px;font-size:21px;color:#000;">341.8</div>
<div style="position:absolute;left:1382.2px;top:1435px;width:85.29999999999995px;height:45px;background:#f0fff0;border-right:1px solid #a0a0a0;border-bottom:1px solid #a0a0a0"></div>
<div class="t" style="top:1448.82px;right:435.5px;font-size:21px;color:#1a8a1a;">535</div>
<div style="position:absolute;left:1467.5px;top:1435px;width:79.20000000000005px;height:45px;background:#f0fff0;border-right:1px solid #a0a0a0;border-bottom:1px solid #a0a0a0"></div>
<div class="t" style="top:1448.82px;right:356.29999999999995px;font-size:21px;color:#000;">25.8</div>
<div style="position:absolute;left:101.5px;top:1480px;width:220px;height:45px;background:#f0f0f0;border-bottom:1.5px solid #6a6a6a;border-right:1.5px solid #6a6a6a;box-shadow:inset 0 1px 0 #fff"></div>
<div class="t" style="top:1496.66px;left:108px;font-size:16px;color:#000;">2298:2334-500x500</div>
<div style="position:absolute;left:321.4px;top:1480px;width:69.0px;height:45px;background:#f0f0f0;border-right:1px solid #a0a0a0;border-bottom:1px solid #a0a0a0"></div>
<div class="t" style="top:1493.92px;left:325.4px;font-size:21px;color:#000;">2</div>
<div style="position:absolute;left:390.4px;top:1480px;width:68.90000000000003px;height:45px;background:#fdeeee;border-right:1px solid #a0a0a0;border-bottom:1px solid #a0a0a0"></div>
<div class="t" style="top:1493.92px;right:1443.7px;font-size:21px;color:#1c1ccc;">384</div>
<div style="position:absolute;left:459.3px;top:1480px;width:69.19999999999999px;height:45px;background:#fdeeee;border-right:1px solid #a0a0a0;border-bottom:1px solid #a0a0a0"></div>
<div class="t" style="top:1493.92px;right:1374.5px;font-size:21px;color:#000;">555.9</div>
<div style="position:absolute;left:528.5px;top:1480px;width:69.5px;height:45px;background:#fdeeee;border-right:1px solid #a0a0a0;border-bottom:1px solid #a0a0a0"></div>
<div class="t" style="top:1493.92px;right:1305px;font-size:21px;color:#1a8a1a;">706</div>
<div style="position:absolute;left:598px;top:1480px;width:69.29999999999995px;height:45px;background:#fdeeee;border-right:1px solid #a0a0a0;border-bottom:1px solid #a0a0a0"></div>
<div class="t" style="top:1493.92px;right:1235.7px;font-size:21px;color:#000;">30.6</div>
<div style="position:absolute;left:667.3px;top:1480px;width:69.20000000000005px;height:45px;background:#f0fff0;border-right:1px solid #a0a0a0;border-bottom:1px solid #a0a0a0"></div>
<div class="t" style="top:1493.92px;right:1166.5px;font-size:21px;color:#1c1ccc;">164</div>
<div style="position:absolute;left:736.5px;top:1480px;width:68.5px;height:45px;background:#f0fff0;border-right:1px solid #a0a0a0;border-bottom:1px solid #a0a0a0"></div>
<div class="t" style="top:1493.92px;right:1098px;font-size:21px;color:#000;">240.4</div>
<div style="position:absolute;left:805px;top:1480px;width:72.20000000000005px;height:45px;background:#f0fff0;border-right:1px solid #a0a0a0;border-bottom:1px solid #a0a0a0"></div>
<div class="t" style="top:1493.92px;right:1025.8px;font-size:21px;color:#1a8a1a;">315</div>
<div style="position:absolute;left:877.2px;top:1480px;width:69.29999999999995px;height:45px;background:#f0fff0;border-right:1px solid #a0a0a0;border-bottom:1px solid #a0a0a0"></div>
<div class="t" style="top:1493.92px;right:956.5px;font-size:21px;color:#000;">17.6</div>
<div style="position:absolute;left:946.5px;top:1480px;width:69.0px;height:45px;background:#f0f0ff;border-right:1px solid #a0a0a0;border-bottom:1px solid #a0a0a0"></div>
<div class="t" style="top:1493.92px;right:887.5px;font-size:21px;color:#1c1ccc;">0</div>
<div style="position:absolute;left:1015.5px;top:1480px;width:68.79999999999995px;height:45px;background:#f0f0ff;border-right:1px solid #a0a0a0;border-bottom:1px solid #a0a0a0"></div>
<div class="t" style="top:1493.92px;right:818.7px;font-size:21px;color:#000;">18.0</div>
<div style="position:absolute;left:1084.3px;top:1480px;width:70.10000000000014px;height:45px;background:#f0f0ff;border-right:1px solid #a0a0a0;border-bottom:1px solid #a0a0a0"></div>
<div class="t" style="top:1493.92px;right:748.5999999999999px;font-size:21px;color:#1a8a1a;">38</div>
<div style="position:absolute;left:1154.4px;top:1480px;width:68.59999999999991px;height:45px;background:#f0f0ff;border-right:1px solid #a0a0a0;border-bottom:1px solid #a0a0a0"></div>
<div class="t" style="top:1493.92px;right:680px;font-size:21px;color:#000;">4.22</div>
<div style="position:absolute;left:1223px;top:1480px;width:80px;height:45px;background:#f0fff0;border-right:1px solid #a0a0a0;border-bottom:1px solid #a0a0a0"></div>
<div class="t" style="top:1493.92px;right:600px;font-size:21px;color:#1c1ccc;">172</div>
<div style="position:absolute;left:1303px;top:1480px;width:79.20000000000005px;height:45px;background:#f0fff0;border-right:1px solid #a0a0a0;border-bottom:1px solid #a0a0a0"></div>
<div class="t" style="top:1493.92px;right:520.8px;font-size:21px;color:#000;">242.7</div>
<div style="position:absolute;left:1382.2px;top:1480px;width:85.29999999999995px;height:45px;background:#f0fff0;border-right:1px solid #a0a0a0;border-bottom:1px solid #a0a0a0"></div>
<div class="t" style="top:1493.92px;right:435.5px;font-size:21px;color:#1a8a1a;">317</div>
<div style="position:absolute;left:1467.5px;top:1480px;width:79.20000000000005px;height:45px;background:#f0fff0;border-right:1px solid #a0a0a0;border-bottom:1px solid #a0a0a0"></div>
<div class="t" style="top:1493.92px;right:356.29999999999995px;font-size:21px;color:#000;">17.7</div>
<div style="position:absolute;left:320.4px;top:1435px;width:1.6px;height:90px;background:#6a6a6a"></div>
<div style="position:absolute;left:322px;top:1436px;width:68px;height:44px;border:1px dotted #222"></div>
</body></html>
